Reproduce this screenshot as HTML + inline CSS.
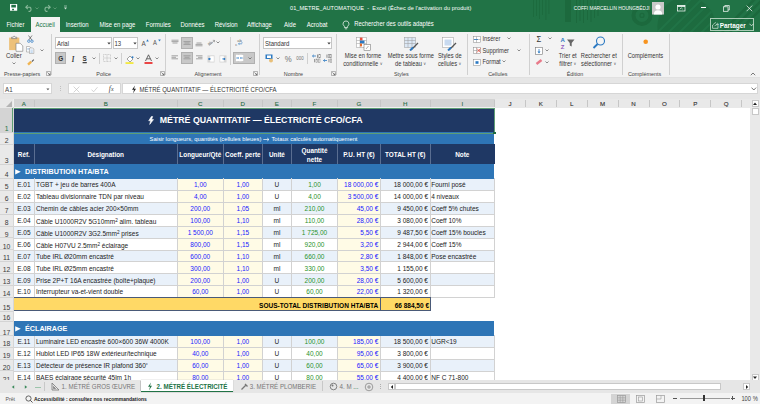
<!DOCTYPE html><html><head><meta charset="utf-8"><style>
html,body{margin:0;padding:0} body{width:760px;height:404px;overflow:hidden;position:relative;background:#fff;font-family:"Liberation Sans", sans-serif}
.a{position:absolute;box-sizing:border-box}
.t{position:absolute;white-space:nowrap;box-sizing:border-box}
</style></head><body>
<div class="a" style="left:13.4px;top:107.5px;width:481.1px;height:24.69999999999999px;background:#1f3864"></div>
<svg class="a" style="left:148.2px;top:116.4px" width="7" height="9"><polygon points="3.4,0.5 0.7,4.8 2.7,4.8 1.7,8.4 5.5,3.6 3.5,3.6 4.7,0.5" fill="#fff" stroke="#fff" stroke-width="0.6" stroke-linejoin="round"/></svg>
<div class="t" style="left:159.7px;top:112.0px;height:17.6px;line-height:17.6px;font-size:8.8px;color:#fff;font-weight:bold;">MÉTRÉ QUANTITATIF — ÉLECTRICITÉ CFO/CFA</div>
<div class="a" style="left:13.4px;top:132.2px;width:481.1px;height:12.100000000000023px;background:#2e75b6"></div>
<div class="t" style="left:53.5px;width:400px;text-align:center;top:134.29999999999998px;height:11.6px;line-height:11.6px;font-size:5.8px;color:#fff;font-weight:normal;">Saisir longueurs, quantités (cellules bleues) <svg width="7" height="5" style="vertical-align:-0.3px"><path d="M0.3 2.5 H5.8 M4.2 1 L6 2.5 L4.2 4" stroke="#fff" stroke-width="0.7" fill="none"/></svg> Totaux calculés automatiquement</div>
<div class="a" style="left:13.4px;top:144.3px;width:20.9px;height:19.69999999999999px;background:#1f3864"></div>
<div class="t" style="left:-176.15px;width:400px;text-align:center;top:148.65px;height:12.8px;line-height:12.8px;font-size:6.4px;color:#fff;font-weight:bold;">Réf.</div>
<div class="a" style="left:34.3px;top:144.3px;width:142.89999999999998px;height:19.69999999999999px;background:#1f3864"></div>
<div class="t" style="left:-94.25px;width:400px;text-align:center;top:148.65px;height:12.8px;line-height:12.8px;font-size:6.4px;color:#fff;font-weight:bold;">Désignation</div>
<div class="a" style="left:177.2px;top:144.3px;width:46.20000000000002px;height:19.69999999999999px;background:#1f3864"></div>
<div class="t" style="left:0.30000000000001137px;width:400px;text-align:center;top:148.65px;height:12.8px;line-height:12.8px;font-size:6.4px;color:#fff;font-weight:bold;">Longueur/Qté</div>
<div class="a" style="left:223.4px;top:144.3px;width:38.900000000000006px;height:19.69999999999999px;background:#1f3864"></div>
<div class="t" style="left:42.85000000000002px;width:400px;text-align:center;top:148.65px;height:12.8px;line-height:12.8px;font-size:6.4px;color:#fff;font-weight:bold;">Coeff. perte</div>
<div class="a" style="left:262.3px;top:144.3px;width:29.30000000000001px;height:19.69999999999999px;background:#1f3864"></div>
<div class="t" style="left:76.95000000000005px;width:400px;text-align:center;top:148.65px;height:12.8px;line-height:12.8px;font-size:6.4px;color:#fff;font-weight:bold;">Unité</div>
<div class="a" style="left:291.6px;top:144.3px;width:45.799999999999955px;height:19.69999999999999px;background:#1f3864"></div>
<div class="t" style="left:291.6px;width:45.799999999999955px;top:145.9px;text-align:center;font-size:6.4px;line-height:9.2px;color:#fff;font-weight:bold">Quantité<br>nette</div>
<div class="a" style="left:337.4px;top:144.3px;width:43.0px;height:19.69999999999999px;background:#1f3864"></div>
<div class="t" style="left:158.89999999999998px;width:400px;text-align:center;top:148.65px;height:12.8px;line-height:12.8px;font-size:6.4px;color:#fff;font-weight:bold;">P.U. HT (€)</div>
<div class="a" style="left:380.4px;top:144.3px;width:49.60000000000002px;height:19.69999999999999px;background:#1f3864"></div>
<div class="t" style="left:205.2px;width:400px;text-align:center;top:148.65px;height:12.8px;line-height:12.8px;font-size:6.4px;color:#fff;font-weight:bold;">TOTAL HT (€)</div>
<div class="a" style="left:430px;top:144.3px;width:64.5px;height:19.69999999999999px;background:#1f3864"></div>
<div class="t" style="left:262.25px;width:400px;text-align:center;top:148.65px;height:12.8px;line-height:12.8px;font-size:6.4px;color:#fff;font-weight:bold;">Note</div>
<div class="a" style="left:33.8px;top:144.3px;width:1.0px;height:19.69999999999999px;background:#5a6e91"></div>
<div class="a" style="left:176.7px;top:144.3px;width:1.0px;height:19.69999999999999px;background:#5a6e91"></div>
<div class="a" style="left:222.9px;top:144.3px;width:1.0px;height:19.69999999999999px;background:#5a6e91"></div>
<div class="a" style="left:261.8px;top:144.3px;width:1.0px;height:19.69999999999999px;background:#5a6e91"></div>
<div class="a" style="left:291.1px;top:144.3px;width:1.0px;height:19.69999999999999px;background:#5a6e91"></div>
<div class="a" style="left:336.9px;top:144.3px;width:1.0px;height:19.69999999999999px;background:#5a6e91"></div>
<div class="a" style="left:379.9px;top:144.3px;width:1.0px;height:19.69999999999999px;background:#5a6e91"></div>
<div class="a" style="left:429.5px;top:144.3px;width:1.0px;height:19.69999999999999px;background:#5a6e91"></div>
<div class="a" style="left:13.4px;top:164px;width:481.1px;height:14.5px;background:#2e75b6"></div>
<svg class="a" style="left:14.5px;top:169px" width="6" height="6"><polygon points="0.2,0.2 5.8,2.8 0.2,5.4" fill="#fff"/></svg>
<div class="t" style="left:25px;top:164.60000000000002px;height:14.4px;line-height:14.4px;font-size:7.2px;color:#fff;font-weight:bold;">DISTRIBUTION HTA/BTA</div>
<div class="a" style="left:13.4px;top:178.5px;width:20.9px;height:11.889999999999986px;background:#e9f1fa"></div>
<div class="t" style="left:-176.15px;width:400px;text-align:center;top:178.44px;height:13.0px;line-height:13.0px;font-size:6.5px;color:#222;font-weight:normal;">E.01</div>
<div class="a" style="left:34.3px;top:178.5px;width:142.89999999999998px;height:11.889999999999986px;background:#e9f1fa"></div>
<div class="t" style="left:36.0px;top:178.44px;height:13.0px;line-height:13.0px;font-size:6.5px;color:#222;font-weight:normal;">TGBT + jeu de barres 400A</div>
<div class="a" style="left:177.2px;top:178.5px;width:46.20000000000002px;height:11.889999999999986px;background:#fffbe6"></div>
<div class="t" style="left:0.30000000000001137px;width:400px;text-align:center;top:178.44px;height:13.0px;line-height:13.0px;font-size:6.5px;color:#1a1aff;font-weight:normal;">1,00</div>
<div class="a" style="left:223.4px;top:178.5px;width:38.900000000000006px;height:11.889999999999986px;background:#fffbe6"></div>
<div class="t" style="left:42.85000000000002px;width:400px;text-align:center;top:178.44px;height:13.0px;line-height:13.0px;font-size:6.5px;color:#1a1aff;font-weight:normal;">1,00</div>
<div class="a" style="left:262.3px;top:178.5px;width:29.30000000000001px;height:11.889999999999986px;background:#e9f1fa"></div>
<div class="t" style="left:76.95000000000005px;width:400px;text-align:center;top:178.44px;height:13.0px;line-height:13.0px;font-size:6.5px;color:#222;font-weight:normal;">U</div>
<div class="a" style="left:291.6px;top:178.5px;width:45.799999999999955px;height:11.889999999999986px;background:#e9f1fa"></div>
<div class="t" style="left:114.5px;width:400px;text-align:center;top:178.44px;height:13.0px;line-height:13.0px;font-size:6.5px;color:#2a922a;font-weight:normal;">1,00</div>
<div class="a" style="left:337.4px;top:178.5px;width:43.0px;height:11.889999999999986px;background:#fffbe6"></div>
<div class="t" style="left:-21.600000000000023px;width:400px;text-align:right;top:178.44px;height:13.0px;line-height:13.0px;font-size:6.5px;color:#1a1aff;font-weight:normal;">18 000,00 €</div>
<div class="a" style="left:380.4px;top:178.5px;width:49.60000000000002px;height:11.889999999999986px;background:#e9f1fa"></div>
<div class="t" style="left:28px;width:400px;text-align:right;top:178.44px;height:13.0px;line-height:13.0px;font-size:6.5px;color:#222;font-weight:normal;">18 000,00 €</div>
<div class="a" style="left:430px;top:178.5px;width:64.5px;height:11.889999999999986px;background:#e9f1fa"></div>
<div class="t" style="left:431.2px;top:178.44px;height:13.0px;line-height:13.0px;font-size:6.5px;color:#222;font-weight:normal;">Fourni posé</div>
<div class="a" style="left:13.4px;top:190.39px;width:20.9px;height:11.889999999999986px;background:#ffffff"></div>
<div class="t" style="left:-176.15px;width:400px;text-align:center;top:190.32999999999998px;height:13.0px;line-height:13.0px;font-size:6.5px;color:#222;font-weight:normal;">E.02</div>
<div class="a" style="left:34.3px;top:190.39px;width:142.89999999999998px;height:11.889999999999986px;background:#ffffff"></div>
<div class="t" style="left:36.0px;top:190.32999999999998px;height:13.0px;line-height:13.0px;font-size:6.5px;color:#222;font-weight:normal;">Tableau divisionnaire TDN par niveau</div>
<div class="a" style="left:177.2px;top:190.39px;width:46.20000000000002px;height:11.889999999999986px;background:#fffbe6"></div>
<div class="t" style="left:0.30000000000001137px;width:400px;text-align:center;top:190.32999999999998px;height:13.0px;line-height:13.0px;font-size:6.5px;color:#1a1aff;font-weight:normal;">4,00</div>
<div class="a" style="left:223.4px;top:190.39px;width:38.900000000000006px;height:11.889999999999986px;background:#fffbe6"></div>
<div class="t" style="left:42.85000000000002px;width:400px;text-align:center;top:190.32999999999998px;height:13.0px;line-height:13.0px;font-size:6.5px;color:#1a1aff;font-weight:normal;">1,00</div>
<div class="a" style="left:262.3px;top:190.39px;width:29.30000000000001px;height:11.889999999999986px;background:#ffffff"></div>
<div class="t" style="left:76.95000000000005px;width:400px;text-align:center;top:190.32999999999998px;height:13.0px;line-height:13.0px;font-size:6.5px;color:#222;font-weight:normal;">U</div>
<div class="a" style="left:291.6px;top:190.39px;width:45.799999999999955px;height:11.889999999999986px;background:#ffffff"></div>
<div class="t" style="left:114.5px;width:400px;text-align:center;top:190.32999999999998px;height:13.0px;line-height:13.0px;font-size:6.5px;color:#2a922a;font-weight:normal;">4,00</div>
<div class="a" style="left:337.4px;top:190.39px;width:43.0px;height:11.889999999999986px;background:#fffbe6"></div>
<div class="t" style="left:-21.600000000000023px;width:400px;text-align:right;top:190.32999999999998px;height:13.0px;line-height:13.0px;font-size:6.5px;color:#1a1aff;font-weight:normal;">3 500,00 €</div>
<div class="a" style="left:380.4px;top:190.39px;width:49.60000000000002px;height:11.889999999999986px;background:#ffffff"></div>
<div class="t" style="left:28px;width:400px;text-align:right;top:190.32999999999998px;height:13.0px;line-height:13.0px;font-size:6.5px;color:#222;font-weight:normal;">14 000,00 €</div>
<div class="a" style="left:430px;top:190.39px;width:64.5px;height:11.889999999999986px;background:#ffffff"></div>
<div class="t" style="left:431.2px;top:190.32999999999998px;height:13.0px;line-height:13.0px;font-size:6.5px;color:#222;font-weight:normal;">4 niveaux</div>
<div class="a" style="left:13.4px;top:202.27999999999997px;width:20.9px;height:11.889999999999986px;background:#e9f1fa"></div>
<div class="t" style="left:-176.15px;width:400px;text-align:center;top:202.21999999999997px;height:13.0px;line-height:13.0px;font-size:6.5px;color:#222;font-weight:normal;">E.03</div>
<div class="a" style="left:34.3px;top:202.27999999999997px;width:142.89999999999998px;height:11.889999999999986px;background:#e9f1fa"></div>
<div class="t" style="left:36.0px;top:202.21999999999997px;height:13.0px;line-height:13.0px;font-size:6.5px;color:#222;font-weight:normal;">Chemin de câbles acier 200×50mm</div>
<div class="a" style="left:177.2px;top:202.27999999999997px;width:46.20000000000002px;height:11.889999999999986px;background:#fffbe6"></div>
<div class="t" style="left:0.30000000000001137px;width:400px;text-align:center;top:202.21999999999997px;height:13.0px;line-height:13.0px;font-size:6.5px;color:#1a1aff;font-weight:normal;">200,00</div>
<div class="a" style="left:223.4px;top:202.27999999999997px;width:38.900000000000006px;height:11.889999999999986px;background:#fffbe6"></div>
<div class="t" style="left:42.85000000000002px;width:400px;text-align:center;top:202.21999999999997px;height:13.0px;line-height:13.0px;font-size:6.5px;color:#1a1aff;font-weight:normal;">1,05</div>
<div class="a" style="left:262.3px;top:202.27999999999997px;width:29.30000000000001px;height:11.889999999999986px;background:#e9f1fa"></div>
<div class="t" style="left:76.95000000000005px;width:400px;text-align:center;top:202.21999999999997px;height:13.0px;line-height:13.0px;font-size:6.5px;color:#222;font-weight:normal;">ml</div>
<div class="a" style="left:291.6px;top:202.27999999999997px;width:45.799999999999955px;height:11.889999999999986px;background:#e9f1fa"></div>
<div class="t" style="left:114.5px;width:400px;text-align:center;top:202.21999999999997px;height:13.0px;line-height:13.0px;font-size:6.5px;color:#2a922a;font-weight:normal;">210,00</div>
<div class="a" style="left:337.4px;top:202.27999999999997px;width:43.0px;height:11.889999999999986px;background:#fffbe6"></div>
<div class="t" style="left:-21.600000000000023px;width:400px;text-align:right;top:202.21999999999997px;height:13.0px;line-height:13.0px;font-size:6.5px;color:#1a1aff;font-weight:normal;">45,00 €</div>
<div class="a" style="left:380.4px;top:202.27999999999997px;width:49.60000000000002px;height:11.889999999999986px;background:#e9f1fa"></div>
<div class="t" style="left:28px;width:400px;text-align:right;top:202.21999999999997px;height:13.0px;line-height:13.0px;font-size:6.5px;color:#222;font-weight:normal;">9 450,00 €</div>
<div class="a" style="left:430px;top:202.27999999999997px;width:64.5px;height:11.889999999999986px;background:#e9f1fa"></div>
<div class="t" style="left:431.2px;top:202.21999999999997px;height:13.0px;line-height:13.0px;font-size:6.5px;color:#222;font-weight:normal;">Coeff 5% chutes</div>
<div class="a" style="left:13.4px;top:214.16999999999996px;width:20.9px;height:11.889999999999986px;background:#ffffff"></div>
<div class="t" style="left:-176.15px;width:400px;text-align:center;top:214.10999999999996px;height:13.0px;line-height:13.0px;font-size:6.5px;color:#222;font-weight:normal;">E.04</div>
<div class="a" style="left:34.3px;top:214.16999999999996px;width:142.89999999999998px;height:11.889999999999986px;background:#ffffff"></div>
<div class="t" style="left:36.0px;top:214.10999999999996px;height:13.0px;line-height:13.0px;font-size:6.5px;color:#222;font-weight:normal;">Câble U1000R2V 5G10mm<span style="font-size:4.6px;vertical-align:1.6px">2</span> alim. tableau</div>
<div class="a" style="left:177.2px;top:214.16999999999996px;width:46.20000000000002px;height:11.889999999999986px;background:#fffbe6"></div>
<div class="t" style="left:0.30000000000001137px;width:400px;text-align:center;top:214.10999999999996px;height:13.0px;line-height:13.0px;font-size:6.5px;color:#1a1aff;font-weight:normal;">100,00</div>
<div class="a" style="left:223.4px;top:214.16999999999996px;width:38.900000000000006px;height:11.889999999999986px;background:#fffbe6"></div>
<div class="t" style="left:42.85000000000002px;width:400px;text-align:center;top:214.10999999999996px;height:13.0px;line-height:13.0px;font-size:6.5px;color:#1a1aff;font-weight:normal;">1,10</div>
<div class="a" style="left:262.3px;top:214.16999999999996px;width:29.30000000000001px;height:11.889999999999986px;background:#ffffff"></div>
<div class="t" style="left:76.95000000000005px;width:400px;text-align:center;top:214.10999999999996px;height:13.0px;line-height:13.0px;font-size:6.5px;color:#222;font-weight:normal;">ml</div>
<div class="a" style="left:291.6px;top:214.16999999999996px;width:45.799999999999955px;height:11.889999999999986px;background:#ffffff"></div>
<div class="t" style="left:114.5px;width:400px;text-align:center;top:214.10999999999996px;height:13.0px;line-height:13.0px;font-size:6.5px;color:#2a922a;font-weight:normal;">110,00</div>
<div class="a" style="left:337.4px;top:214.16999999999996px;width:43.0px;height:11.889999999999986px;background:#fffbe6"></div>
<div class="t" style="left:-21.600000000000023px;width:400px;text-align:right;top:214.10999999999996px;height:13.0px;line-height:13.0px;font-size:6.5px;color:#1a1aff;font-weight:normal;">28,00 €</div>
<div class="a" style="left:380.4px;top:214.16999999999996px;width:49.60000000000002px;height:11.889999999999986px;background:#ffffff"></div>
<div class="t" style="left:28px;width:400px;text-align:right;top:214.10999999999996px;height:13.0px;line-height:13.0px;font-size:6.5px;color:#222;font-weight:normal;">3 080,00 €</div>
<div class="a" style="left:430px;top:214.16999999999996px;width:64.5px;height:11.889999999999986px;background:#ffffff"></div>
<div class="t" style="left:431.2px;top:214.10999999999996px;height:13.0px;line-height:13.0px;font-size:6.5px;color:#222;font-weight:normal;">Coeff 10%</div>
<div class="a" style="left:13.4px;top:226.05999999999995px;width:20.9px;height:11.889999999999986px;background:#e9f1fa"></div>
<div class="t" style="left:-176.15px;width:400px;text-align:center;top:225.99999999999994px;height:13.0px;line-height:13.0px;font-size:6.5px;color:#222;font-weight:normal;">E.05</div>
<div class="a" style="left:34.3px;top:226.05999999999995px;width:142.89999999999998px;height:11.889999999999986px;background:#e9f1fa"></div>
<div class="t" style="left:36.0px;top:225.99999999999994px;height:13.0px;line-height:13.0px;font-size:6.5px;color:#222;font-weight:normal;">Câble U1000R2V 3G2.5mm<span style="font-size:4.6px;vertical-align:1.6px">2</span> prises</div>
<div class="a" style="left:177.2px;top:226.05999999999995px;width:46.20000000000002px;height:11.889999999999986px;background:#fffbe6"></div>
<div class="t" style="left:0.30000000000001137px;width:400px;text-align:center;top:225.99999999999994px;height:13.0px;line-height:13.0px;font-size:6.5px;color:#1a1aff;font-weight:normal;">1 500,00</div>
<div class="a" style="left:223.4px;top:226.05999999999995px;width:38.900000000000006px;height:11.889999999999986px;background:#fffbe6"></div>
<div class="t" style="left:42.85000000000002px;width:400px;text-align:center;top:225.99999999999994px;height:13.0px;line-height:13.0px;font-size:6.5px;color:#1a1aff;font-weight:normal;">1,15</div>
<div class="a" style="left:262.3px;top:226.05999999999995px;width:29.30000000000001px;height:11.889999999999986px;background:#e9f1fa"></div>
<div class="t" style="left:76.95000000000005px;width:400px;text-align:center;top:225.99999999999994px;height:13.0px;line-height:13.0px;font-size:6.5px;color:#222;font-weight:normal;">ml</div>
<div class="a" style="left:291.6px;top:226.05999999999995px;width:45.799999999999955px;height:11.889999999999986px;background:#e9f1fa"></div>
<div class="t" style="left:114.5px;width:400px;text-align:center;top:225.99999999999994px;height:13.0px;line-height:13.0px;font-size:6.5px;color:#2a922a;font-weight:normal;">1 725,00</div>
<div class="a" style="left:337.4px;top:226.05999999999995px;width:43.0px;height:11.889999999999986px;background:#fffbe6"></div>
<div class="t" style="left:-21.600000000000023px;width:400px;text-align:right;top:225.99999999999994px;height:13.0px;line-height:13.0px;font-size:6.5px;color:#1a1aff;font-weight:normal;">5,50 €</div>
<div class="a" style="left:380.4px;top:226.05999999999995px;width:49.60000000000002px;height:11.889999999999986px;background:#e9f1fa"></div>
<div class="t" style="left:28px;width:400px;text-align:right;top:225.99999999999994px;height:13.0px;line-height:13.0px;font-size:6.5px;color:#222;font-weight:normal;">9 487,50 €</div>
<div class="a" style="left:430px;top:226.05999999999995px;width:64.5px;height:11.889999999999986px;background:#e9f1fa"></div>
<div class="t" style="left:431.2px;top:225.99999999999994px;height:13.0px;line-height:13.0px;font-size:6.5px;color:#222;font-weight:normal;">Coeff 15% boucles</div>
<div class="a" style="left:13.4px;top:237.94999999999993px;width:20.9px;height:11.889999999999986px;background:#ffffff"></div>
<div class="t" style="left:-176.15px;width:400px;text-align:center;top:237.88999999999993px;height:13.0px;line-height:13.0px;font-size:6.5px;color:#222;font-weight:normal;">E.06</div>
<div class="a" style="left:34.3px;top:237.94999999999993px;width:142.89999999999998px;height:11.889999999999986px;background:#ffffff"></div>
<div class="t" style="left:36.0px;top:237.88999999999993px;height:13.0px;line-height:13.0px;font-size:6.5px;color:#222;font-weight:normal;">Câble H07VU 2.5mm<span style="font-size:4.6px;vertical-align:1.6px">2</span> éclairage</div>
<div class="a" style="left:177.2px;top:237.94999999999993px;width:46.20000000000002px;height:11.889999999999986px;background:#fffbe6"></div>
<div class="t" style="left:0.30000000000001137px;width:400px;text-align:center;top:237.88999999999993px;height:13.0px;line-height:13.0px;font-size:6.5px;color:#1a1aff;font-weight:normal;">800,00</div>
<div class="a" style="left:223.4px;top:237.94999999999993px;width:38.900000000000006px;height:11.889999999999986px;background:#fffbe6"></div>
<div class="t" style="left:42.85000000000002px;width:400px;text-align:center;top:237.88999999999993px;height:13.0px;line-height:13.0px;font-size:6.5px;color:#1a1aff;font-weight:normal;">1,15</div>
<div class="a" style="left:262.3px;top:237.94999999999993px;width:29.30000000000001px;height:11.889999999999986px;background:#ffffff"></div>
<div class="t" style="left:76.95000000000005px;width:400px;text-align:center;top:237.88999999999993px;height:13.0px;line-height:13.0px;font-size:6.5px;color:#222;font-weight:normal;">ml</div>
<div class="a" style="left:291.6px;top:237.94999999999993px;width:45.799999999999955px;height:11.889999999999986px;background:#ffffff"></div>
<div class="t" style="left:114.5px;width:400px;text-align:center;top:237.88999999999993px;height:13.0px;line-height:13.0px;font-size:6.5px;color:#2a922a;font-weight:normal;">920,00</div>
<div class="a" style="left:337.4px;top:237.94999999999993px;width:43.0px;height:11.889999999999986px;background:#fffbe6"></div>
<div class="t" style="left:-21.600000000000023px;width:400px;text-align:right;top:237.88999999999993px;height:13.0px;line-height:13.0px;font-size:6.5px;color:#1a1aff;font-weight:normal;">3,20 €</div>
<div class="a" style="left:380.4px;top:237.94999999999993px;width:49.60000000000002px;height:11.889999999999986px;background:#ffffff"></div>
<div class="t" style="left:28px;width:400px;text-align:right;top:237.88999999999993px;height:13.0px;line-height:13.0px;font-size:6.5px;color:#222;font-weight:normal;">2 944,00 €</div>
<div class="a" style="left:430px;top:237.94999999999993px;width:64.5px;height:11.889999999999986px;background:#ffffff"></div>
<div class="t" style="left:431.2px;top:237.88999999999993px;height:13.0px;line-height:13.0px;font-size:6.5px;color:#222;font-weight:normal;">Coeff 15%</div>
<div class="a" style="left:13.4px;top:249.83999999999992px;width:20.9px;height:11.889999999999986px;background:#e9f1fa"></div>
<div class="t" style="left:-176.15px;width:400px;text-align:center;top:249.77999999999992px;height:13.0px;line-height:13.0px;font-size:6.5px;color:#222;font-weight:normal;">E.07</div>
<div class="a" style="left:34.3px;top:249.83999999999992px;width:142.89999999999998px;height:11.889999999999986px;background:#e9f1fa"></div>
<div class="t" style="left:36.0px;top:249.77999999999992px;height:13.0px;line-height:13.0px;font-size:6.5px;color:#222;font-weight:normal;">Tube IRL Ø20mm encastré</div>
<div class="a" style="left:177.2px;top:249.83999999999992px;width:46.20000000000002px;height:11.889999999999986px;background:#fffbe6"></div>
<div class="t" style="left:0.30000000000001137px;width:400px;text-align:center;top:249.77999999999992px;height:13.0px;line-height:13.0px;font-size:6.5px;color:#1a1aff;font-weight:normal;">600,00</div>
<div class="a" style="left:223.4px;top:249.83999999999992px;width:38.900000000000006px;height:11.889999999999986px;background:#fffbe6"></div>
<div class="t" style="left:42.85000000000002px;width:400px;text-align:center;top:249.77999999999992px;height:13.0px;line-height:13.0px;font-size:6.5px;color:#1a1aff;font-weight:normal;">1,10</div>
<div class="a" style="left:262.3px;top:249.83999999999992px;width:29.30000000000001px;height:11.889999999999986px;background:#e9f1fa"></div>
<div class="t" style="left:76.95000000000005px;width:400px;text-align:center;top:249.77999999999992px;height:13.0px;line-height:13.0px;font-size:6.5px;color:#222;font-weight:normal;">ml</div>
<div class="a" style="left:291.6px;top:249.83999999999992px;width:45.799999999999955px;height:11.889999999999986px;background:#e9f1fa"></div>
<div class="t" style="left:114.5px;width:400px;text-align:center;top:249.77999999999992px;height:13.0px;line-height:13.0px;font-size:6.5px;color:#2a922a;font-weight:normal;">660,00</div>
<div class="a" style="left:337.4px;top:249.83999999999992px;width:43.0px;height:11.889999999999986px;background:#fffbe6"></div>
<div class="t" style="left:-21.600000000000023px;width:400px;text-align:right;top:249.77999999999992px;height:13.0px;line-height:13.0px;font-size:6.5px;color:#1a1aff;font-weight:normal;">2,80 €</div>
<div class="a" style="left:380.4px;top:249.83999999999992px;width:49.60000000000002px;height:11.889999999999986px;background:#e9f1fa"></div>
<div class="t" style="left:28px;width:400px;text-align:right;top:249.77999999999992px;height:13.0px;line-height:13.0px;font-size:6.5px;color:#222;font-weight:normal;">1 848,00 €</div>
<div class="a" style="left:430px;top:249.83999999999992px;width:64.5px;height:11.889999999999986px;background:#e9f1fa"></div>
<div class="t" style="left:431.2px;top:249.77999999999992px;height:13.0px;line-height:13.0px;font-size:6.5px;color:#222;font-weight:normal;">Pose encastrée</div>
<div class="a" style="left:13.4px;top:261.7299999999999px;width:20.9px;height:11.889999999999986px;background:#ffffff"></div>
<div class="t" style="left:-176.15px;width:400px;text-align:center;top:261.6699999999999px;height:13.0px;line-height:13.0px;font-size:6.5px;color:#222;font-weight:normal;">E.08</div>
<div class="a" style="left:34.3px;top:261.7299999999999px;width:142.89999999999998px;height:11.889999999999986px;background:#ffffff"></div>
<div class="t" style="left:36.0px;top:261.6699999999999px;height:13.0px;line-height:13.0px;font-size:6.5px;color:#222;font-weight:normal;">Tube IRL Ø25mm encastré</div>
<div class="a" style="left:177.2px;top:261.7299999999999px;width:46.20000000000002px;height:11.889999999999986px;background:#fffbe6"></div>
<div class="t" style="left:0.30000000000001137px;width:400px;text-align:center;top:261.6699999999999px;height:13.0px;line-height:13.0px;font-size:6.5px;color:#1a1aff;font-weight:normal;">300,00</div>
<div class="a" style="left:223.4px;top:261.7299999999999px;width:38.900000000000006px;height:11.889999999999986px;background:#fffbe6"></div>
<div class="t" style="left:42.85000000000002px;width:400px;text-align:center;top:261.6699999999999px;height:13.0px;line-height:13.0px;font-size:6.5px;color:#1a1aff;font-weight:normal;">1,10</div>
<div class="a" style="left:262.3px;top:261.7299999999999px;width:29.30000000000001px;height:11.889999999999986px;background:#ffffff"></div>
<div class="t" style="left:76.95000000000005px;width:400px;text-align:center;top:261.6699999999999px;height:13.0px;line-height:13.0px;font-size:6.5px;color:#222;font-weight:normal;">ml</div>
<div class="a" style="left:291.6px;top:261.7299999999999px;width:45.799999999999955px;height:11.889999999999986px;background:#ffffff"></div>
<div class="t" style="left:114.5px;width:400px;text-align:center;top:261.6699999999999px;height:13.0px;line-height:13.0px;font-size:6.5px;color:#2a922a;font-weight:normal;">330,00</div>
<div class="a" style="left:337.4px;top:261.7299999999999px;width:43.0px;height:11.889999999999986px;background:#fffbe6"></div>
<div class="t" style="left:-21.600000000000023px;width:400px;text-align:right;top:261.6699999999999px;height:13.0px;line-height:13.0px;font-size:6.5px;color:#1a1aff;font-weight:normal;">3,50 €</div>
<div class="a" style="left:380.4px;top:261.7299999999999px;width:49.60000000000002px;height:11.889999999999986px;background:#ffffff"></div>
<div class="t" style="left:28px;width:400px;text-align:right;top:261.6699999999999px;height:13.0px;line-height:13.0px;font-size:6.5px;color:#222;font-weight:normal;">1 155,00 €</div>
<div class="a" style="left:430px;top:261.7299999999999px;width:64.5px;height:11.889999999999986px;background:#ffffff"></div>
<div class="a" style="left:13.4px;top:273.6199999999999px;width:20.9px;height:11.889999999999986px;background:#e9f1fa"></div>
<div class="t" style="left:-176.15px;width:400px;text-align:center;top:273.5599999999999px;height:13.0px;line-height:13.0px;font-size:6.5px;color:#222;font-weight:normal;">E.09</div>
<div class="a" style="left:34.3px;top:273.6199999999999px;width:142.89999999999998px;height:11.889999999999986px;background:#e9f1fa"></div>
<div class="t" style="left:36.0px;top:273.5599999999999px;height:13.0px;line-height:13.0px;font-size:6.5px;color:#222;font-weight:normal;">Prise 2P+T 16A encastrée (boîte+plaque)</div>
<div class="a" style="left:177.2px;top:273.6199999999999px;width:46.20000000000002px;height:11.889999999999986px;background:#fffbe6"></div>
<div class="t" style="left:0.30000000000001137px;width:400px;text-align:center;top:273.5599999999999px;height:13.0px;line-height:13.0px;font-size:6.5px;color:#1a1aff;font-weight:normal;">200,00</div>
<div class="a" style="left:223.4px;top:273.6199999999999px;width:38.900000000000006px;height:11.889999999999986px;background:#fffbe6"></div>
<div class="t" style="left:42.85000000000002px;width:400px;text-align:center;top:273.5599999999999px;height:13.0px;line-height:13.0px;font-size:6.5px;color:#1a1aff;font-weight:normal;">1,00</div>
<div class="a" style="left:262.3px;top:273.6199999999999px;width:29.30000000000001px;height:11.889999999999986px;background:#e9f1fa"></div>
<div class="t" style="left:76.95000000000005px;width:400px;text-align:center;top:273.5599999999999px;height:13.0px;line-height:13.0px;font-size:6.5px;color:#222;font-weight:normal;">U</div>
<div class="a" style="left:291.6px;top:273.6199999999999px;width:45.799999999999955px;height:11.889999999999986px;background:#e9f1fa"></div>
<div class="t" style="left:114.5px;width:400px;text-align:center;top:273.5599999999999px;height:13.0px;line-height:13.0px;font-size:6.5px;color:#2a922a;font-weight:normal;">200,00</div>
<div class="a" style="left:337.4px;top:273.6199999999999px;width:43.0px;height:11.889999999999986px;background:#fffbe6"></div>
<div class="t" style="left:-21.600000000000023px;width:400px;text-align:right;top:273.5599999999999px;height:13.0px;line-height:13.0px;font-size:6.5px;color:#1a1aff;font-weight:normal;">28,00 €</div>
<div class="a" style="left:380.4px;top:273.6199999999999px;width:49.60000000000002px;height:11.889999999999986px;background:#e9f1fa"></div>
<div class="t" style="left:28px;width:400px;text-align:right;top:273.5599999999999px;height:13.0px;line-height:13.0px;font-size:6.5px;color:#222;font-weight:normal;">5 600,00 €</div>
<div class="a" style="left:430px;top:273.6199999999999px;width:64.5px;height:11.889999999999986px;background:#e9f1fa"></div>
<div class="a" style="left:13.4px;top:285.5099999999999px;width:20.9px;height:11.889999999999986px;background:#ffffff"></div>
<div class="t" style="left:-176.15px;width:400px;text-align:center;top:285.4499999999999px;height:13.0px;line-height:13.0px;font-size:6.5px;color:#222;font-weight:normal;">E.10</div>
<div class="a" style="left:34.3px;top:285.5099999999999px;width:142.89999999999998px;height:11.889999999999986px;background:#ffffff"></div>
<div class="t" style="left:36.0px;top:285.4499999999999px;height:13.0px;line-height:13.0px;font-size:6.5px;color:#222;font-weight:normal;">Interrupteur va-et-vient double</div>
<div class="a" style="left:177.2px;top:285.5099999999999px;width:46.20000000000002px;height:11.889999999999986px;background:#fffbe6"></div>
<div class="t" style="left:0.30000000000001137px;width:400px;text-align:center;top:285.4499999999999px;height:13.0px;line-height:13.0px;font-size:6.5px;color:#1a1aff;font-weight:normal;">60,00</div>
<div class="a" style="left:223.4px;top:285.5099999999999px;width:38.900000000000006px;height:11.889999999999986px;background:#fffbe6"></div>
<div class="t" style="left:42.85000000000002px;width:400px;text-align:center;top:285.4499999999999px;height:13.0px;line-height:13.0px;font-size:6.5px;color:#1a1aff;font-weight:normal;">1,00</div>
<div class="a" style="left:262.3px;top:285.5099999999999px;width:29.30000000000001px;height:11.889999999999986px;background:#ffffff"></div>
<div class="t" style="left:76.95000000000005px;width:400px;text-align:center;top:285.4499999999999px;height:13.0px;line-height:13.0px;font-size:6.5px;color:#222;font-weight:normal;">U</div>
<div class="a" style="left:291.6px;top:285.5099999999999px;width:45.799999999999955px;height:11.889999999999986px;background:#ffffff"></div>
<div class="t" style="left:114.5px;width:400px;text-align:center;top:285.4499999999999px;height:13.0px;line-height:13.0px;font-size:6.5px;color:#2a922a;font-weight:normal;">60,00</div>
<div class="a" style="left:337.4px;top:285.5099999999999px;width:43.0px;height:11.889999999999986px;background:#fffbe6"></div>
<div class="t" style="left:-21.600000000000023px;width:400px;text-align:right;top:285.4499999999999px;height:13.0px;line-height:13.0px;font-size:6.5px;color:#1a1aff;font-weight:normal;">22,00 €</div>
<div class="a" style="left:380.4px;top:285.5099999999999px;width:49.60000000000002px;height:11.889999999999986px;background:#ffffff"></div>
<div class="t" style="left:28px;width:400px;text-align:right;top:285.4499999999999px;height:13.0px;line-height:13.0px;font-size:6.5px;color:#222;font-weight:normal;">1 320,00 €</div>
<div class="a" style="left:430px;top:285.5099999999999px;width:64.5px;height:11.889999999999986px;background:#ffffff"></div>
<div class="a" style="left:13.4px;top:335.3px;width:20.9px;height:11.879999999999995px;background:#e9f1fa"></div>
<div class="t" style="left:-176.15px;width:400px;text-align:center;top:335.23px;height:13.0px;line-height:13.0px;font-size:6.5px;color:#222;font-weight:normal;">E.11</div>
<div class="a" style="left:34.3px;top:335.3px;width:142.89999999999998px;height:11.879999999999995px;background:#e9f1fa"></div>
<div class="t" style="left:36.0px;top:335.23px;height:13.0px;line-height:13.0px;font-size:6.5px;color:#222;font-weight:normal;">Luminaire LED encastré 600×600 36W 4000K</div>
<div class="a" style="left:177.2px;top:335.3px;width:46.20000000000002px;height:11.879999999999995px;background:#fffbe6"></div>
<div class="t" style="left:0.30000000000001137px;width:400px;text-align:center;top:335.23px;height:13.0px;line-height:13.0px;font-size:6.5px;color:#1a1aff;font-weight:normal;">100,00</div>
<div class="a" style="left:223.4px;top:335.3px;width:38.900000000000006px;height:11.879999999999995px;background:#fffbe6"></div>
<div class="t" style="left:42.85000000000002px;width:400px;text-align:center;top:335.23px;height:13.0px;line-height:13.0px;font-size:6.5px;color:#1a1aff;font-weight:normal;">1,00</div>
<div class="a" style="left:262.3px;top:335.3px;width:29.30000000000001px;height:11.879999999999995px;background:#e9f1fa"></div>
<div class="t" style="left:76.95000000000005px;width:400px;text-align:center;top:335.23px;height:13.0px;line-height:13.0px;font-size:6.5px;color:#222;font-weight:normal;">U</div>
<div class="a" style="left:291.6px;top:335.3px;width:45.799999999999955px;height:11.879999999999995px;background:#e9f1fa"></div>
<div class="t" style="left:114.5px;width:400px;text-align:center;top:335.23px;height:13.0px;line-height:13.0px;font-size:6.5px;color:#2a922a;font-weight:normal;">100,00</div>
<div class="a" style="left:337.4px;top:335.3px;width:43.0px;height:11.879999999999995px;background:#fffbe6"></div>
<div class="t" style="left:-21.600000000000023px;width:400px;text-align:right;top:335.23px;height:13.0px;line-height:13.0px;font-size:6.5px;color:#1a1aff;font-weight:normal;">185,00 €</div>
<div class="a" style="left:380.4px;top:335.3px;width:49.60000000000002px;height:11.879999999999995px;background:#e9f1fa"></div>
<div class="t" style="left:28px;width:400px;text-align:right;top:335.23px;height:13.0px;line-height:13.0px;font-size:6.5px;color:#222;font-weight:normal;">18 500,00 €</div>
<div class="a" style="left:430px;top:335.3px;width:64.5px;height:11.879999999999995px;background:#e9f1fa"></div>
<div class="t" style="left:431.2px;top:335.23px;height:13.0px;line-height:13.0px;font-size:6.5px;color:#222;font-weight:normal;">UGR&lt;19</div>
<div class="a" style="left:13.4px;top:347.18px;width:20.9px;height:11.879999999999995px;background:#ffffff"></div>
<div class="t" style="left:-176.15px;width:400px;text-align:center;top:347.11px;height:13.0px;line-height:13.0px;font-size:6.5px;color:#222;font-weight:normal;">E.12</div>
<div class="a" style="left:34.3px;top:347.18px;width:142.89999999999998px;height:11.879999999999995px;background:#ffffff"></div>
<div class="t" style="left:36.0px;top:347.11px;height:13.0px;line-height:13.0px;font-size:6.5px;color:#222;font-weight:normal;">Hublot LED IP65 18W extérieur/technique</div>
<div class="a" style="left:177.2px;top:347.18px;width:46.20000000000002px;height:11.879999999999995px;background:#fffbe6"></div>
<div class="t" style="left:0.30000000000001137px;width:400px;text-align:center;top:347.11px;height:13.0px;line-height:13.0px;font-size:6.5px;color:#1a1aff;font-weight:normal;">40,00</div>
<div class="a" style="left:223.4px;top:347.18px;width:38.900000000000006px;height:11.879999999999995px;background:#fffbe6"></div>
<div class="t" style="left:42.85000000000002px;width:400px;text-align:center;top:347.11px;height:13.0px;line-height:13.0px;font-size:6.5px;color:#1a1aff;font-weight:normal;">1,00</div>
<div class="a" style="left:262.3px;top:347.18px;width:29.30000000000001px;height:11.879999999999995px;background:#ffffff"></div>
<div class="t" style="left:76.95000000000005px;width:400px;text-align:center;top:347.11px;height:13.0px;line-height:13.0px;font-size:6.5px;color:#222;font-weight:normal;">U</div>
<div class="a" style="left:291.6px;top:347.18px;width:45.799999999999955px;height:11.879999999999995px;background:#ffffff"></div>
<div class="t" style="left:114.5px;width:400px;text-align:center;top:347.11px;height:13.0px;line-height:13.0px;font-size:6.5px;color:#2a922a;font-weight:normal;">40,00</div>
<div class="a" style="left:337.4px;top:347.18px;width:43.0px;height:11.879999999999995px;background:#fffbe6"></div>
<div class="t" style="left:-21.600000000000023px;width:400px;text-align:right;top:347.11px;height:13.0px;line-height:13.0px;font-size:6.5px;color:#1a1aff;font-weight:normal;">95,00 €</div>
<div class="a" style="left:380.4px;top:347.18px;width:49.60000000000002px;height:11.879999999999995px;background:#ffffff"></div>
<div class="t" style="left:28px;width:400px;text-align:right;top:347.11px;height:13.0px;line-height:13.0px;font-size:6.5px;color:#222;font-weight:normal;">3 800,00 €</div>
<div class="a" style="left:430px;top:347.18px;width:64.5px;height:11.879999999999995px;background:#ffffff"></div>
<div class="a" style="left:13.4px;top:359.06px;width:20.9px;height:11.879999999999995px;background:#e9f1fa"></div>
<div class="t" style="left:-176.15px;width:400px;text-align:center;top:358.99px;height:13.0px;line-height:13.0px;font-size:6.5px;color:#222;font-weight:normal;">E.13</div>
<div class="a" style="left:34.3px;top:359.06px;width:142.89999999999998px;height:11.879999999999995px;background:#e9f1fa"></div>
<div class="t" style="left:36.0px;top:358.99px;height:13.0px;line-height:13.0px;font-size:6.5px;color:#222;font-weight:normal;">Détecteur de présence IR plafond 360<span style="font-size:5px;vertical-align:1.2px">°</span></div>
<div class="a" style="left:177.2px;top:359.06px;width:46.20000000000002px;height:11.879999999999995px;background:#fffbe6"></div>
<div class="t" style="left:0.30000000000001137px;width:400px;text-align:center;top:358.99px;height:13.0px;line-height:13.0px;font-size:6.5px;color:#1a1aff;font-weight:normal;">60,00</div>
<div class="a" style="left:223.4px;top:359.06px;width:38.900000000000006px;height:11.879999999999995px;background:#fffbe6"></div>
<div class="t" style="left:42.85000000000002px;width:400px;text-align:center;top:358.99px;height:13.0px;line-height:13.0px;font-size:6.5px;color:#1a1aff;font-weight:normal;">1,00</div>
<div class="a" style="left:262.3px;top:359.06px;width:29.30000000000001px;height:11.879999999999995px;background:#e9f1fa"></div>
<div class="t" style="left:76.95000000000005px;width:400px;text-align:center;top:358.99px;height:13.0px;line-height:13.0px;font-size:6.5px;color:#222;font-weight:normal;">U</div>
<div class="a" style="left:291.6px;top:359.06px;width:45.799999999999955px;height:11.879999999999995px;background:#e9f1fa"></div>
<div class="t" style="left:114.5px;width:400px;text-align:center;top:358.99px;height:13.0px;line-height:13.0px;font-size:6.5px;color:#2a922a;font-weight:normal;">60,00</div>
<div class="a" style="left:337.4px;top:359.06px;width:43.0px;height:11.879999999999995px;background:#fffbe6"></div>
<div class="t" style="left:-21.600000000000023px;width:400px;text-align:right;top:358.99px;height:13.0px;line-height:13.0px;font-size:6.5px;color:#1a1aff;font-weight:normal;">65,00 €</div>
<div class="a" style="left:380.4px;top:359.06px;width:49.60000000000002px;height:11.879999999999995px;background:#e9f1fa"></div>
<div class="t" style="left:28px;width:400px;text-align:right;top:358.99px;height:13.0px;line-height:13.0px;font-size:6.5px;color:#222;font-weight:normal;">3 900,00 €</div>
<div class="a" style="left:430px;top:359.06px;width:64.5px;height:11.879999999999995px;background:#e9f1fa"></div>
<div class="a" style="left:13.4px;top:370.94px;width:20.9px;height:11.879999999999995px;background:#ffffff"></div>
<div class="t" style="left:-176.15px;width:400px;text-align:center;top:370.87px;height:13.0px;line-height:13.0px;font-size:6.5px;color:#222;font-weight:normal;">E.14</div>
<div class="a" style="left:34.3px;top:370.94px;width:142.89999999999998px;height:11.879999999999995px;background:#ffffff"></div>
<div class="t" style="left:36.0px;top:370.87px;height:13.0px;line-height:13.0px;font-size:6.5px;color:#222;font-weight:normal;">BAES éclairage sécurité 45lm 1h</div>
<div class="a" style="left:177.2px;top:370.94px;width:46.20000000000002px;height:11.879999999999995px;background:#fffbe6"></div>
<div class="t" style="left:0.30000000000001137px;width:400px;text-align:center;top:370.87px;height:13.0px;line-height:13.0px;font-size:6.5px;color:#1a1aff;font-weight:normal;">80,00</div>
<div class="a" style="left:223.4px;top:370.94px;width:38.900000000000006px;height:11.879999999999995px;background:#fffbe6"></div>
<div class="t" style="left:42.85000000000002px;width:400px;text-align:center;top:370.87px;height:13.0px;line-height:13.0px;font-size:6.5px;color:#1a1aff;font-weight:normal;">1,00</div>
<div class="a" style="left:262.3px;top:370.94px;width:29.30000000000001px;height:11.879999999999995px;background:#ffffff"></div>
<div class="t" style="left:76.95000000000005px;width:400px;text-align:center;top:370.87px;height:13.0px;line-height:13.0px;font-size:6.5px;color:#222;font-weight:normal;">U</div>
<div class="a" style="left:291.6px;top:370.94px;width:45.799999999999955px;height:11.879999999999995px;background:#ffffff"></div>
<div class="t" style="left:114.5px;width:400px;text-align:center;top:370.87px;height:13.0px;line-height:13.0px;font-size:6.5px;color:#2a922a;font-weight:normal;">80,00</div>
<div class="a" style="left:337.4px;top:370.94px;width:43.0px;height:11.879999999999995px;background:#fffbe6"></div>
<div class="t" style="left:-21.600000000000023px;width:400px;text-align:right;top:370.87px;height:13.0px;line-height:13.0px;font-size:6.5px;color:#1a1aff;font-weight:normal;">55,00 €</div>
<div class="a" style="left:380.4px;top:370.94px;width:49.60000000000002px;height:11.879999999999995px;background:#ffffff"></div>
<div class="t" style="left:28px;width:400px;text-align:right;top:370.87px;height:13.0px;line-height:13.0px;font-size:6.5px;color:#222;font-weight:normal;">4 400,00 €</div>
<div class="a" style="left:430px;top:370.94px;width:64.5px;height:11.879999999999995px;background:#ffffff"></div>
<div class="t" style="left:431.2px;top:370.87px;height:13.0px;line-height:13.0px;font-size:6.5px;color:#222;font-weight:normal;">NF C 71-800</div>
<div class="a" style="left:33.8px;top:178.0px;width:1.0px;height:12.889999999999986px;background:#d2d2d2"></div>
<div class="a" style="left:176.7px;top:178.0px;width:1.0px;height:12.889999999999986px;background:#d2d2d2"></div>
<div class="a" style="left:222.9px;top:178.0px;width:1.0px;height:12.889999999999986px;background:#d2d2d2"></div>
<div class="a" style="left:261.8px;top:178.0px;width:1.0px;height:12.889999999999986px;background:#d2d2d2"></div>
<div class="a" style="left:291.1px;top:178.0px;width:1.0px;height:12.889999999999986px;background:#d2d2d2"></div>
<div class="a" style="left:336.9px;top:178.0px;width:1.0px;height:12.889999999999986px;background:#d2d2d2"></div>
<div class="a" style="left:379.9px;top:178.0px;width:1.0px;height:12.889999999999986px;background:#d2d2d2"></div>
<div class="a" style="left:429.5px;top:178.0px;width:1.0px;height:12.889999999999986px;background:#d2d2d2"></div>
<div class="a" style="left:494.0px;top:178.0px;width:1.0px;height:12.889999999999986px;background:#d2d2d2"></div>
<div class="a" style="left:13.4px;top:190.08999999999997px;width:481.1px;height:1.0px;background:#d2d2d2"></div>
<div class="a" style="left:33.8px;top:189.89px;width:1.0px;height:12.889999999999986px;background:#d2d2d2"></div>
<div class="a" style="left:176.7px;top:189.89px;width:1.0px;height:12.889999999999986px;background:#d2d2d2"></div>
<div class="a" style="left:222.9px;top:189.89px;width:1.0px;height:12.889999999999986px;background:#d2d2d2"></div>
<div class="a" style="left:261.8px;top:189.89px;width:1.0px;height:12.889999999999986px;background:#d2d2d2"></div>
<div class="a" style="left:291.1px;top:189.89px;width:1.0px;height:12.889999999999986px;background:#d2d2d2"></div>
<div class="a" style="left:336.9px;top:189.89px;width:1.0px;height:12.889999999999986px;background:#d2d2d2"></div>
<div class="a" style="left:379.9px;top:189.89px;width:1.0px;height:12.889999999999986px;background:#d2d2d2"></div>
<div class="a" style="left:429.5px;top:189.89px;width:1.0px;height:12.889999999999986px;background:#d2d2d2"></div>
<div class="a" style="left:494.0px;top:189.89px;width:1.0px;height:12.889999999999986px;background:#d2d2d2"></div>
<div class="a" style="left:13.4px;top:201.97999999999996px;width:481.1px;height:1.0px;background:#d2d2d2"></div>
<div class="a" style="left:33.8px;top:201.77999999999997px;width:1.0px;height:12.889999999999986px;background:#d2d2d2"></div>
<div class="a" style="left:176.7px;top:201.77999999999997px;width:1.0px;height:12.889999999999986px;background:#d2d2d2"></div>
<div class="a" style="left:222.9px;top:201.77999999999997px;width:1.0px;height:12.889999999999986px;background:#d2d2d2"></div>
<div class="a" style="left:261.8px;top:201.77999999999997px;width:1.0px;height:12.889999999999986px;background:#d2d2d2"></div>
<div class="a" style="left:291.1px;top:201.77999999999997px;width:1.0px;height:12.889999999999986px;background:#d2d2d2"></div>
<div class="a" style="left:336.9px;top:201.77999999999997px;width:1.0px;height:12.889999999999986px;background:#d2d2d2"></div>
<div class="a" style="left:379.9px;top:201.77999999999997px;width:1.0px;height:12.889999999999986px;background:#d2d2d2"></div>
<div class="a" style="left:429.5px;top:201.77999999999997px;width:1.0px;height:12.889999999999986px;background:#d2d2d2"></div>
<div class="a" style="left:494.0px;top:201.77999999999997px;width:1.0px;height:12.889999999999986px;background:#d2d2d2"></div>
<div class="a" style="left:13.4px;top:213.86999999999995px;width:481.1px;height:1.0px;background:#d2d2d2"></div>
<div class="a" style="left:33.8px;top:213.66999999999996px;width:1.0px;height:12.889999999999986px;background:#d2d2d2"></div>
<div class="a" style="left:176.7px;top:213.66999999999996px;width:1.0px;height:12.889999999999986px;background:#d2d2d2"></div>
<div class="a" style="left:222.9px;top:213.66999999999996px;width:1.0px;height:12.889999999999986px;background:#d2d2d2"></div>
<div class="a" style="left:261.8px;top:213.66999999999996px;width:1.0px;height:12.889999999999986px;background:#d2d2d2"></div>
<div class="a" style="left:291.1px;top:213.66999999999996px;width:1.0px;height:12.889999999999986px;background:#d2d2d2"></div>
<div class="a" style="left:336.9px;top:213.66999999999996px;width:1.0px;height:12.889999999999986px;background:#d2d2d2"></div>
<div class="a" style="left:379.9px;top:213.66999999999996px;width:1.0px;height:12.889999999999986px;background:#d2d2d2"></div>
<div class="a" style="left:429.5px;top:213.66999999999996px;width:1.0px;height:12.889999999999986px;background:#d2d2d2"></div>
<div class="a" style="left:494.0px;top:213.66999999999996px;width:1.0px;height:12.889999999999986px;background:#d2d2d2"></div>
<div class="a" style="left:13.4px;top:225.75999999999993px;width:481.1px;height:1.0px;background:#d2d2d2"></div>
<div class="a" style="left:33.8px;top:225.55999999999995px;width:1.0px;height:12.889999999999986px;background:#d2d2d2"></div>
<div class="a" style="left:176.7px;top:225.55999999999995px;width:1.0px;height:12.889999999999986px;background:#d2d2d2"></div>
<div class="a" style="left:222.9px;top:225.55999999999995px;width:1.0px;height:12.889999999999986px;background:#d2d2d2"></div>
<div class="a" style="left:261.8px;top:225.55999999999995px;width:1.0px;height:12.889999999999986px;background:#d2d2d2"></div>
<div class="a" style="left:291.1px;top:225.55999999999995px;width:1.0px;height:12.889999999999986px;background:#d2d2d2"></div>
<div class="a" style="left:336.9px;top:225.55999999999995px;width:1.0px;height:12.889999999999986px;background:#d2d2d2"></div>
<div class="a" style="left:379.9px;top:225.55999999999995px;width:1.0px;height:12.889999999999986px;background:#d2d2d2"></div>
<div class="a" style="left:429.5px;top:225.55999999999995px;width:1.0px;height:12.889999999999986px;background:#d2d2d2"></div>
<div class="a" style="left:494.0px;top:225.55999999999995px;width:1.0px;height:12.889999999999986px;background:#d2d2d2"></div>
<div class="a" style="left:13.4px;top:237.64999999999992px;width:481.1px;height:1.0px;background:#d2d2d2"></div>
<div class="a" style="left:33.8px;top:237.44999999999993px;width:1.0px;height:12.889999999999986px;background:#d2d2d2"></div>
<div class="a" style="left:176.7px;top:237.44999999999993px;width:1.0px;height:12.889999999999986px;background:#d2d2d2"></div>
<div class="a" style="left:222.9px;top:237.44999999999993px;width:1.0px;height:12.889999999999986px;background:#d2d2d2"></div>
<div class="a" style="left:261.8px;top:237.44999999999993px;width:1.0px;height:12.889999999999986px;background:#d2d2d2"></div>
<div class="a" style="left:291.1px;top:237.44999999999993px;width:1.0px;height:12.889999999999986px;background:#d2d2d2"></div>
<div class="a" style="left:336.9px;top:237.44999999999993px;width:1.0px;height:12.889999999999986px;background:#d2d2d2"></div>
<div class="a" style="left:379.9px;top:237.44999999999993px;width:1.0px;height:12.889999999999986px;background:#d2d2d2"></div>
<div class="a" style="left:429.5px;top:237.44999999999993px;width:1.0px;height:12.889999999999986px;background:#d2d2d2"></div>
<div class="a" style="left:494.0px;top:237.44999999999993px;width:1.0px;height:12.889999999999986px;background:#d2d2d2"></div>
<div class="a" style="left:13.4px;top:249.5399999999999px;width:481.1px;height:1.0px;background:#d2d2d2"></div>
<div class="a" style="left:33.8px;top:249.33999999999992px;width:1.0px;height:12.889999999999986px;background:#d2d2d2"></div>
<div class="a" style="left:176.7px;top:249.33999999999992px;width:1.0px;height:12.889999999999986px;background:#d2d2d2"></div>
<div class="a" style="left:222.9px;top:249.33999999999992px;width:1.0px;height:12.889999999999986px;background:#d2d2d2"></div>
<div class="a" style="left:261.8px;top:249.33999999999992px;width:1.0px;height:12.889999999999986px;background:#d2d2d2"></div>
<div class="a" style="left:291.1px;top:249.33999999999992px;width:1.0px;height:12.889999999999986px;background:#d2d2d2"></div>
<div class="a" style="left:336.9px;top:249.33999999999992px;width:1.0px;height:12.889999999999986px;background:#d2d2d2"></div>
<div class="a" style="left:379.9px;top:249.33999999999992px;width:1.0px;height:12.889999999999986px;background:#d2d2d2"></div>
<div class="a" style="left:429.5px;top:249.33999999999992px;width:1.0px;height:12.889999999999986px;background:#d2d2d2"></div>
<div class="a" style="left:494.0px;top:249.33999999999992px;width:1.0px;height:12.889999999999986px;background:#d2d2d2"></div>
<div class="a" style="left:13.4px;top:261.4299999999999px;width:481.1px;height:1.0px;background:#d2d2d2"></div>
<div class="a" style="left:33.8px;top:261.2299999999999px;width:1.0px;height:12.889999999999986px;background:#d2d2d2"></div>
<div class="a" style="left:176.7px;top:261.2299999999999px;width:1.0px;height:12.889999999999986px;background:#d2d2d2"></div>
<div class="a" style="left:222.9px;top:261.2299999999999px;width:1.0px;height:12.889999999999986px;background:#d2d2d2"></div>
<div class="a" style="left:261.8px;top:261.2299999999999px;width:1.0px;height:12.889999999999986px;background:#d2d2d2"></div>
<div class="a" style="left:291.1px;top:261.2299999999999px;width:1.0px;height:12.889999999999986px;background:#d2d2d2"></div>
<div class="a" style="left:336.9px;top:261.2299999999999px;width:1.0px;height:12.889999999999986px;background:#d2d2d2"></div>
<div class="a" style="left:379.9px;top:261.2299999999999px;width:1.0px;height:12.889999999999986px;background:#d2d2d2"></div>
<div class="a" style="left:429.5px;top:261.2299999999999px;width:1.0px;height:12.889999999999986px;background:#d2d2d2"></div>
<div class="a" style="left:494.0px;top:261.2299999999999px;width:1.0px;height:12.889999999999986px;background:#d2d2d2"></div>
<div class="a" style="left:13.4px;top:273.3199999999999px;width:481.1px;height:1.0px;background:#d2d2d2"></div>
<div class="a" style="left:33.8px;top:273.1199999999999px;width:1.0px;height:12.889999999999986px;background:#d2d2d2"></div>
<div class="a" style="left:176.7px;top:273.1199999999999px;width:1.0px;height:12.889999999999986px;background:#d2d2d2"></div>
<div class="a" style="left:222.9px;top:273.1199999999999px;width:1.0px;height:12.889999999999986px;background:#d2d2d2"></div>
<div class="a" style="left:261.8px;top:273.1199999999999px;width:1.0px;height:12.889999999999986px;background:#d2d2d2"></div>
<div class="a" style="left:291.1px;top:273.1199999999999px;width:1.0px;height:12.889999999999986px;background:#d2d2d2"></div>
<div class="a" style="left:336.9px;top:273.1199999999999px;width:1.0px;height:12.889999999999986px;background:#d2d2d2"></div>
<div class="a" style="left:379.9px;top:273.1199999999999px;width:1.0px;height:12.889999999999986px;background:#d2d2d2"></div>
<div class="a" style="left:429.5px;top:273.1199999999999px;width:1.0px;height:12.889999999999986px;background:#d2d2d2"></div>
<div class="a" style="left:494.0px;top:273.1199999999999px;width:1.0px;height:12.889999999999986px;background:#d2d2d2"></div>
<div class="a" style="left:13.4px;top:285.20999999999987px;width:481.1px;height:1.0px;background:#d2d2d2"></div>
<div class="a" style="left:33.8px;top:285.0099999999999px;width:1.0px;height:12.889999999999986px;background:#d2d2d2"></div>
<div class="a" style="left:176.7px;top:285.0099999999999px;width:1.0px;height:12.889999999999986px;background:#d2d2d2"></div>
<div class="a" style="left:222.9px;top:285.0099999999999px;width:1.0px;height:12.889999999999986px;background:#d2d2d2"></div>
<div class="a" style="left:261.8px;top:285.0099999999999px;width:1.0px;height:12.889999999999986px;background:#d2d2d2"></div>
<div class="a" style="left:291.1px;top:285.0099999999999px;width:1.0px;height:12.889999999999986px;background:#d2d2d2"></div>
<div class="a" style="left:336.9px;top:285.0099999999999px;width:1.0px;height:12.889999999999986px;background:#d2d2d2"></div>
<div class="a" style="left:379.9px;top:285.0099999999999px;width:1.0px;height:12.889999999999986px;background:#d2d2d2"></div>
<div class="a" style="left:429.5px;top:285.0099999999999px;width:1.0px;height:12.889999999999986px;background:#d2d2d2"></div>
<div class="a" style="left:494.0px;top:285.0099999999999px;width:1.0px;height:12.889999999999986px;background:#d2d2d2"></div>
<div class="a" style="left:13.4px;top:297.09999999999985px;width:481.1px;height:1.0px;background:#d2d2d2"></div>
<div class="a" style="left:33.8px;top:334.8px;width:1.0px;height:12.879999999999995px;background:#d2d2d2"></div>
<div class="a" style="left:176.7px;top:334.8px;width:1.0px;height:12.879999999999995px;background:#d2d2d2"></div>
<div class="a" style="left:222.9px;top:334.8px;width:1.0px;height:12.879999999999995px;background:#d2d2d2"></div>
<div class="a" style="left:261.8px;top:334.8px;width:1.0px;height:12.879999999999995px;background:#d2d2d2"></div>
<div class="a" style="left:291.1px;top:334.8px;width:1.0px;height:12.879999999999995px;background:#d2d2d2"></div>
<div class="a" style="left:336.9px;top:334.8px;width:1.0px;height:12.879999999999995px;background:#d2d2d2"></div>
<div class="a" style="left:379.9px;top:334.8px;width:1.0px;height:12.879999999999995px;background:#d2d2d2"></div>
<div class="a" style="left:429.5px;top:334.8px;width:1.0px;height:12.879999999999995px;background:#d2d2d2"></div>
<div class="a" style="left:494.0px;top:334.8px;width:1.0px;height:12.879999999999995px;background:#d2d2d2"></div>
<div class="a" style="left:13.4px;top:346.88px;width:481.1px;height:1.0px;background:#d2d2d2"></div>
<div class="a" style="left:33.8px;top:346.68px;width:1.0px;height:12.879999999999995px;background:#d2d2d2"></div>
<div class="a" style="left:176.7px;top:346.68px;width:1.0px;height:12.879999999999995px;background:#d2d2d2"></div>
<div class="a" style="left:222.9px;top:346.68px;width:1.0px;height:12.879999999999995px;background:#d2d2d2"></div>
<div class="a" style="left:261.8px;top:346.68px;width:1.0px;height:12.879999999999995px;background:#d2d2d2"></div>
<div class="a" style="left:291.1px;top:346.68px;width:1.0px;height:12.879999999999995px;background:#d2d2d2"></div>
<div class="a" style="left:336.9px;top:346.68px;width:1.0px;height:12.879999999999995px;background:#d2d2d2"></div>
<div class="a" style="left:379.9px;top:346.68px;width:1.0px;height:12.879999999999995px;background:#d2d2d2"></div>
<div class="a" style="left:429.5px;top:346.68px;width:1.0px;height:12.879999999999995px;background:#d2d2d2"></div>
<div class="a" style="left:494.0px;top:346.68px;width:1.0px;height:12.879999999999995px;background:#d2d2d2"></div>
<div class="a" style="left:13.4px;top:358.76px;width:481.1px;height:1.0px;background:#d2d2d2"></div>
<div class="a" style="left:33.8px;top:358.56px;width:1.0px;height:12.879999999999995px;background:#d2d2d2"></div>
<div class="a" style="left:176.7px;top:358.56px;width:1.0px;height:12.879999999999995px;background:#d2d2d2"></div>
<div class="a" style="left:222.9px;top:358.56px;width:1.0px;height:12.879999999999995px;background:#d2d2d2"></div>
<div class="a" style="left:261.8px;top:358.56px;width:1.0px;height:12.879999999999995px;background:#d2d2d2"></div>
<div class="a" style="left:291.1px;top:358.56px;width:1.0px;height:12.879999999999995px;background:#d2d2d2"></div>
<div class="a" style="left:336.9px;top:358.56px;width:1.0px;height:12.879999999999995px;background:#d2d2d2"></div>
<div class="a" style="left:379.9px;top:358.56px;width:1.0px;height:12.879999999999995px;background:#d2d2d2"></div>
<div class="a" style="left:429.5px;top:358.56px;width:1.0px;height:12.879999999999995px;background:#d2d2d2"></div>
<div class="a" style="left:494.0px;top:358.56px;width:1.0px;height:12.879999999999995px;background:#d2d2d2"></div>
<div class="a" style="left:13.4px;top:370.64px;width:481.1px;height:1.0px;background:#d2d2d2"></div>
<div class="a" style="left:33.8px;top:370.44px;width:1.0px;height:12.879999999999995px;background:#d2d2d2"></div>
<div class="a" style="left:176.7px;top:370.44px;width:1.0px;height:12.879999999999995px;background:#d2d2d2"></div>
<div class="a" style="left:222.9px;top:370.44px;width:1.0px;height:12.879999999999995px;background:#d2d2d2"></div>
<div class="a" style="left:261.8px;top:370.44px;width:1.0px;height:12.879999999999995px;background:#d2d2d2"></div>
<div class="a" style="left:291.1px;top:370.44px;width:1.0px;height:12.879999999999995px;background:#d2d2d2"></div>
<div class="a" style="left:336.9px;top:370.44px;width:1.0px;height:12.879999999999995px;background:#d2d2d2"></div>
<div class="a" style="left:379.9px;top:370.44px;width:1.0px;height:12.879999999999995px;background:#d2d2d2"></div>
<div class="a" style="left:429.5px;top:370.44px;width:1.0px;height:12.879999999999995px;background:#d2d2d2"></div>
<div class="a" style="left:494.0px;top:370.44px;width:1.0px;height:12.879999999999995px;background:#d2d2d2"></div>
<div class="a" style="left:13.4px;top:382.52px;width:481.1px;height:1.0px;background:#d2d2d2"></div>
<div class="a" style="left:13px;top:297.3px;width:417.5px;height:13.899999999999977px;background:#ffd966;border:1px solid #4a5a78"></div>
<div class="a" style="left:380px;top:297.3px;width:1px;height:13.899999999999977px;background:#4a5a78"></div>
<div class="t" style="left:-21.69999999999999px;width:400px;text-align:right;top:298.68px;height:13.04px;line-height:13.04px;font-size:6.52px;color:#000;font-weight:bold;">SOUS-TOTAL DISTRIBUTION HTA/BTA</div>
<div class="t" style="left:29px;width:400px;text-align:right;top:298.7px;height:13.0px;line-height:13.0px;font-size:6.5px;color:#000;font-weight:bold;">66 884,50 €</div>
<div class="a" style="left:13.4px;top:321.2px;width:481.1px;height:14.600000000000023px;background:#2e75b6"></div>
<svg class="a" style="left:14.5px;top:325.8px" width="6" height="6"><polygon points="0.2,0.2 5.8,2.8 0.2,5.4" fill="#fff"/></svg>
<div class="t" style="left:25px;top:321.6px;height:14.4px;line-height:14.4px;font-size:7.2px;color:#fff;font-weight:bold;">ÉCLAIRAGE</div>
<div class="a" style="left:12.2px;top:107.6px;width:482.7px;height:26.099999999999994px;border:1.8px solid #5e9e74"></div>
<div class="a" style="left:493.2px;top:131.8px;width:2.6000000000000227px;height:2.5999999999999943px;background:#1e6a3e"></div>
<div class="a" style="left:0px;top:77px;width:760px;height:22px;background:#e6e6e6"></div>
<div class="a" style="left:0px;top:99px;width:750px;height:8.5px;background:#e9e9e9"></div>
<div class="a" style="left:13px;top:99px;width:481.5px;height:8.5px;background:#d4d4d4"></div>
<div class="a" style="left:13px;top:106.8px;width:481.5px;height:0.7999999999999972px;background:#f2f0f0"></div>
<div class="t" style="left:-176.15px;width:400px;text-align:center;top:97.89999999999999px;height:12.4px;line-height:12.4px;font-size:6.2px;color:#2a6e48;font-weight:normal;-webkit-text-stroke:0.12px currentColor">A</div>
<div class="a" style="left:33.8px;top:100px;width:1.0px;height:7px;background:#c6c6c6"></div>
<div class="t" style="left:-94.25px;width:400px;text-align:center;top:97.89999999999999px;height:12.4px;line-height:12.4px;font-size:6.2px;color:#2a6e48;font-weight:normal;-webkit-text-stroke:0.12px currentColor">B</div>
<div class="a" style="left:176.7px;top:100px;width:1.0px;height:7px;background:#c6c6c6"></div>
<div class="t" style="left:0.30000000000001137px;width:400px;text-align:center;top:97.89999999999999px;height:12.4px;line-height:12.4px;font-size:6.2px;color:#2a6e48;font-weight:normal;-webkit-text-stroke:0.12px currentColor">C</div>
<div class="a" style="left:222.9px;top:100px;width:1.0px;height:7px;background:#c6c6c6"></div>
<div class="t" style="left:42.85000000000002px;width:400px;text-align:center;top:97.89999999999999px;height:12.4px;line-height:12.4px;font-size:6.2px;color:#2a6e48;font-weight:normal;-webkit-text-stroke:0.12px currentColor">D</div>
<div class="a" style="left:261.8px;top:100px;width:1.0px;height:7px;background:#c6c6c6"></div>
<div class="t" style="left:76.95000000000005px;width:400px;text-align:center;top:97.89999999999999px;height:12.4px;line-height:12.4px;font-size:6.2px;color:#2a6e48;font-weight:normal;-webkit-text-stroke:0.12px currentColor">E</div>
<div class="a" style="left:291.1px;top:100px;width:1.0px;height:7px;background:#c6c6c6"></div>
<div class="t" style="left:114.5px;width:400px;text-align:center;top:97.89999999999999px;height:12.4px;line-height:12.4px;font-size:6.2px;color:#2a6e48;font-weight:normal;-webkit-text-stroke:0.12px currentColor">F</div>
<div class="a" style="left:336.9px;top:100px;width:1.0px;height:7px;background:#c6c6c6"></div>
<div class="t" style="left:158.89999999999998px;width:400px;text-align:center;top:97.89999999999999px;height:12.4px;line-height:12.4px;font-size:6.2px;color:#2a6e48;font-weight:normal;-webkit-text-stroke:0.12px currentColor">G</div>
<div class="a" style="left:379.9px;top:100px;width:1.0px;height:7px;background:#c6c6c6"></div>
<div class="t" style="left:205.2px;width:400px;text-align:center;top:97.89999999999999px;height:12.4px;line-height:12.4px;font-size:6.2px;color:#2a6e48;font-weight:normal;-webkit-text-stroke:0.12px currentColor">H</div>
<div class="a" style="left:429.5px;top:100px;width:1.0px;height:7px;background:#c6c6c6"></div>
<div class="t" style="left:262.25px;width:400px;text-align:center;top:97.89999999999999px;height:12.4px;line-height:12.4px;font-size:6.2px;color:#2a6e48;font-weight:normal;-webkit-text-stroke:0.12px currentColor">I</div>
<div class="a" style="left:494.0px;top:100px;width:1.0px;height:7px;background:#c6c6c6"></div>
<div class="t" style="left:309.95px;width:400px;text-align:center;top:97.89999999999999px;height:12.4px;line-height:12.4px;font-size:6.2px;color:#333;font-weight:normal;-webkit-text-stroke:0.12px currentColor">J</div>
<div class="a" style="left:524.9px;top:100px;width:1.0px;height:7px;background:#c6c6c6"></div>
<div class="t" style="left:340.8499999999999px;width:400px;text-align:center;top:97.89999999999999px;height:12.4px;line-height:12.4px;font-size:6.2px;color:#333;font-weight:normal;-webkit-text-stroke:0.12px currentColor">K</div>
<div class="a" style="left:555.8px;top:100px;width:1.0px;height:7px;background:#c6c6c6"></div>
<div class="t" style="left:371.75px;width:400px;text-align:center;top:97.89999999999999px;height:12.4px;line-height:12.4px;font-size:6.2px;color:#333;font-weight:normal;-webkit-text-stroke:0.12px currentColor">L</div>
<div class="a" style="left:586.6999999999999px;top:100px;width:1.0px;height:7px;background:#c6c6c6"></div>
<div class="t" style="left:402.64999999999986px;width:400px;text-align:center;top:97.89999999999999px;height:12.4px;line-height:12.4px;font-size:6.2px;color:#333;font-weight:normal;-webkit-text-stroke:0.12px currentColor">M</div>
<div class="a" style="left:617.5999999999999px;top:100px;width:1.0px;height:7px;background:#c6c6c6"></div>
<div class="t" style="left:433.54999999999995px;width:400px;text-align:center;top:97.89999999999999px;height:12.4px;line-height:12.4px;font-size:6.2px;color:#333;font-weight:normal;-webkit-text-stroke:0.12px currentColor">N</div>
<div class="a" style="left:648.4999999999999px;top:100px;width:1.0px;height:7px;background:#c6c6c6"></div>
<div class="t" style="left:464.4499999999998px;width:400px;text-align:center;top:97.89999999999999px;height:12.4px;line-height:12.4px;font-size:6.2px;color:#333;font-weight:normal;-webkit-text-stroke:0.12px currentColor">O</div>
<div class="a" style="left:679.3999999999999px;top:100px;width:1.0px;height:7px;background:#c6c6c6"></div>
<div class="t" style="left:495.3499999999999px;width:400px;text-align:center;top:97.89999999999999px;height:12.4px;line-height:12.4px;font-size:6.2px;color:#333;font-weight:normal;-webkit-text-stroke:0.12px currentColor">P</div>
<div class="a" style="left:710.2999999999998px;top:100px;width:1.0px;height:7px;background:#c6c6c6"></div>
<div class="t" style="left:526.2499999999998px;width:400px;text-align:center;top:97.89999999999999px;height:12.4px;line-height:12.4px;font-size:6.2px;color:#333;font-weight:normal;-webkit-text-stroke:0.12px currentColor">Q</div>
<div class="a" style="left:741.1999999999998px;top:100px;width:1.0px;height:7px;background:#c6c6c6"></div>
<div class="a" style="left:0px;top:99px;width:13px;height:8.5px;background:#e9e9e9"></div>
<svg class="a" style="left:5px;top:100px" width="8" height="8"><polygon points="7,1 7,7 1,7" fill="#b4b4b4"/></svg>
<div class="a" style="left:12.5px;top:99px;width:1.0px;height:8px;background:#f0f0f0"></div>
<div class="a" style="left:12.5px;top:107px;width:1.0px;height:273px;background:#d6d6d6"></div>
<div class="a" style="left:0px;top:107.5px;width:13px;height:272.5px;background:#e9e9e9"></div>
<div class="a" style="left:0px;top:107.5px;width:13px;height:24.69999999999999px;background:#d4d4d4"></div>
<div class="a" style="left:12px;top:107.5px;width:1px;height:24.69999999999999px;background:#5e9e74"></div>
<div class="a" style="left:0px;top:131.7px;width:13px;height:1.0px;background:#d4d4d4"></div>
<div class="t" style="left:-193.4px;width:400px;text-align:center;top:121.89999999999999px;height:13.6px;line-height:13.6px;font-size:6.8px;color:#217346;font-weight:normal;">1</div>
<div class="a" style="left:0px;top:143.8px;width:13px;height:1.0px;background:#d4d4d4"></div>
<div class="t" style="left:-193.4px;width:400px;text-align:center;top:134.0px;height:13.6px;line-height:13.6px;font-size:6.8px;color:#3a3a3a;font-weight:normal;">2</div>
<div class="a" style="left:0px;top:163.5px;width:13px;height:1.0px;background:#d4d4d4"></div>
<div class="t" style="left:-193.4px;width:400px;text-align:center;top:153.7px;height:13.6px;line-height:13.6px;font-size:6.8px;color:#3a3a3a;font-weight:normal;">3</div>
<div class="a" style="left:0px;top:178.0px;width:13px;height:1.0px;background:#d4d4d4"></div>
<div class="t" style="left:-193.4px;width:400px;text-align:center;top:168.2px;height:13.6px;line-height:13.6px;font-size:6.8px;color:#3a3a3a;font-weight:normal;">4</div>
<div class="a" style="left:0px;top:189.89px;width:13px;height:1.0px;background:#d4d4d4"></div>
<div class="t" style="left:-193.4px;width:400px;text-align:center;top:180.08999999999997px;height:13.6px;line-height:13.6px;font-size:6.8px;color:#3a3a3a;font-weight:normal;">5</div>
<div class="a" style="left:0px;top:201.77999999999997px;width:13px;height:1.0px;background:#d4d4d4"></div>
<div class="t" style="left:-193.4px;width:400px;text-align:center;top:191.97999999999996px;height:13.6px;line-height:13.6px;font-size:6.8px;color:#3a3a3a;font-weight:normal;">6</div>
<div class="a" style="left:0px;top:213.66999999999996px;width:13px;height:1.0px;background:#d4d4d4"></div>
<div class="t" style="left:-193.4px;width:400px;text-align:center;top:203.86999999999995px;height:13.6px;line-height:13.6px;font-size:6.8px;color:#3a3a3a;font-weight:normal;">7</div>
<div class="a" style="left:0px;top:225.55999999999995px;width:13px;height:1.0px;background:#d4d4d4"></div>
<div class="t" style="left:-193.4px;width:400px;text-align:center;top:215.75999999999993px;height:13.6px;line-height:13.6px;font-size:6.8px;color:#3a3a3a;font-weight:normal;">8</div>
<div class="a" style="left:0px;top:237.44999999999993px;width:13px;height:1.0px;background:#d4d4d4"></div>
<div class="t" style="left:-193.4px;width:400px;text-align:center;top:227.64999999999992px;height:13.6px;line-height:13.6px;font-size:6.8px;color:#3a3a3a;font-weight:normal;">9</div>
<div class="a" style="left:0px;top:249.33999999999992px;width:13px;height:1.0px;background:#d4d4d4"></div>
<div class="t" style="left:-193.4px;width:400px;text-align:center;top:239.5399999999999px;height:13.6px;line-height:13.6px;font-size:6.8px;color:#3a3a3a;font-weight:normal;">10</div>
<div class="a" style="left:0px;top:261.2299999999999px;width:13px;height:1.0px;background:#d4d4d4"></div>
<div class="t" style="left:-193.4px;width:400px;text-align:center;top:251.4299999999999px;height:13.6px;line-height:13.6px;font-size:6.8px;color:#3a3a3a;font-weight:normal;">11</div>
<div class="a" style="left:0px;top:273.1199999999999px;width:13px;height:1.0px;background:#d4d4d4"></div>
<div class="t" style="left:-193.4px;width:400px;text-align:center;top:263.3199999999999px;height:13.6px;line-height:13.6px;font-size:6.8px;color:#3a3a3a;font-weight:normal;">12</div>
<div class="a" style="left:0px;top:285.0099999999999px;width:13px;height:1.0px;background:#d4d4d4"></div>
<div class="t" style="left:-193.4px;width:400px;text-align:center;top:275.20999999999987px;height:13.6px;line-height:13.6px;font-size:6.8px;color:#3a3a3a;font-weight:normal;">13</div>
<div class="a" style="left:0px;top:296.89999999999986px;width:13px;height:1.0px;background:#d4d4d4"></div>
<div class="t" style="left:-193.4px;width:400px;text-align:center;top:287.09999999999985px;height:13.6px;line-height:13.6px;font-size:6.8px;color:#3a3a3a;font-weight:normal;">14</div>
<div class="a" style="left:0px;top:310.7px;width:13px;height:1.0px;background:#d4d4d4"></div>
<div class="t" style="left:-193.4px;width:400px;text-align:center;top:300.9px;height:13.6px;line-height:13.6px;font-size:6.8px;color:#3a3a3a;font-weight:normal;">15</div>
<div class="a" style="left:0px;top:320.7px;width:13px;height:1.0px;background:#d4d4d4"></div>
<div class="t" style="left:-193.4px;width:400px;text-align:center;top:310.9px;height:13.6px;line-height:13.6px;font-size:6.8px;color:#3a3a3a;font-weight:normal;">16</div>
<div class="a" style="left:0px;top:335.3px;width:13px;height:1.0px;background:#d4d4d4"></div>
<div class="t" style="left:-193.4px;width:400px;text-align:center;top:325.5px;height:13.6px;line-height:13.6px;font-size:6.8px;color:#3a3a3a;font-weight:normal;">17</div>
<div class="a" style="left:0px;top:346.68px;width:13px;height:1.0px;background:#d4d4d4"></div>
<div class="t" style="left:-193.4px;width:400px;text-align:center;top:336.88px;height:13.6px;line-height:13.6px;font-size:6.8px;color:#3a3a3a;font-weight:normal;">18</div>
<div class="a" style="left:0px;top:358.56px;width:13px;height:1.0px;background:#d4d4d4"></div>
<div class="t" style="left:-193.4px;width:400px;text-align:center;top:348.76px;height:13.6px;line-height:13.6px;font-size:6.8px;color:#3a3a3a;font-weight:normal;">19</div>
<div class="a" style="left:0px;top:370.44px;width:13px;height:1.0px;background:#d4d4d4"></div>
<div class="t" style="left:-193.4px;width:400px;text-align:center;top:360.64px;height:13.6px;line-height:13.6px;font-size:6.8px;color:#3a3a3a;font-weight:normal;">20</div>
<div class="a" style="left:0px;top:382.32px;width:13px;height:1.0px;background:#d4d4d4"></div>
<div class="t" style="left:-193.4px;width:400px;text-align:center;top:372.52px;height:13.6px;line-height:13.6px;font-size:6.8px;color:#3a3a3a;font-weight:normal;">21</div>
<div class="a" style="left:750px;top:99px;width:10px;height:281px;background:#e9e9e9"></div>
<div class="a" style="left:751.5px;top:99.8px;width:7.100000000000023px;height:7.200000000000003px;background:#fff;border:0.6px solid #c8c8c8"></div>
<svg class="a" style="left:752px;top:101px" width="6" height="5"><polygon points="1,4 5,4 3,1.5" fill="#222"/></svg>
<div class="a" style="left:751.5px;top:107.7px;width:7.100000000000023px;height:7.599999999999994px;background:#fff;border:0.6px solid #c8c8c8"></div>
<div class="a" style="left:751.5px;top:374.2px;width:7.100000000000023px;height:6.5px;background:#fff;border:0.6px solid #c8c8c8"></div>
<svg class="a" style="left:752px;top:375px" width="6" height="5"><polygon points="1,1.5 5,1.5 3,4" fill="#222"/></svg>
<div class="a" style="left:0px;top:380px;width:760px;height:12.5px;background:#e6e6e6"></div>
<div class="a" style="left:0px;top:392.5px;width:760px;height:11.5px;background:#f3f3f3"></div>
<svg class="a" style="left:11px;top:384.5px" width="4" height="4"><polygon points="3.2,0.3 3.2,3.7 0.8,2" fill="#3c8a5c"/></svg>
<svg class="a" style="left:23.8px;top:384.5px" width="4" height="4"><polygon points="0.8,0.3 0.8,3.7 3.2,2" fill="#3c8a5c"/></svg>
<div class="a" style="left:35px;top:386.5px;width:6px;height:0.8000000000000114px;background:#9cc4ab"></div>
<div class="a" style="left:44.2px;top:381.5px;width:0.5999999999999943px;height:9.5px;background:#c8c8c8"></div>
<svg class="a" style="left:51px;top:381.5px" width="9" height="9"><path d="M1 8 L1 1 L8 8 Z M2.5 6.5 L2.5 4.5 L4.5 6.5 Z" fill="none" stroke="#777" stroke-width="0.8"/></svg>
<div class="t" style="left:61.6px;top:380.1px;height:12.4px;line-height:12.4px;font-size:6.2px;color:#777;font-weight:normal;transform:translateY(0.8px) scaleY(1.12);">1. MÉTRÉ GROS ŒUVRE</div>
<div class="a" style="left:140px;top:381px;width:0.5999999999999943px;height:10px;background:#c8c8c8"></div>
<div class="a" style="left:140.5px;top:380px;width:92.0px;height:12px;background:#fff;box-shadow:0 0 1px #aaa"></div>
<div class="a" style="left:140.5px;top:390.8px;width:92.0px;height:1.1999999999999886px;background:#217346"></div>
<svg class="a" style="left:147px;top:382px" width="6" height="9"><polygon points="4,0.5 1,4.8 3,4.8 2,8.5 5,3.8 3,3.8" fill="#217346"/></svg>
<div class="t" style="left:156.6px;top:380.1px;height:12.4px;line-height:12.4px;font-size:6.2px;color:#217346;font-weight:bold;transform:translateY(0.8px) scaleY(1.12);">2. MÉTRÉ ÉLECTRICITÉ</div>
<svg class="a" style="left:239.5px;top:381.5px" width="9" height="9"><path d="M1.5 7.5 L6 3 M5 2 L7.5 4.5" stroke="#777" stroke-width="1.3" fill="none"/></svg>
<div class="t" style="left:249.7px;top:380.1px;height:12.4px;line-height:12.4px;font-size:6.2px;color:#777;font-weight:normal;transform:translateY(0.8px) scaleY(1.12);">3. MÉTRÉ PLOMBERIE</div>
<div class="a" style="left:321.7px;top:381px;width:0.6000000000000227px;height:10px;background:#c8c8c8"></div>
<svg class="a" style="left:328.5px;top:381.5px" width="9" height="9"><circle cx="4.5" cy="4.5" r="3.3" fill="none" stroke="#777" stroke-width="0.9"/><circle cx="3.5" cy="3.6" r="1" fill="#777"/></svg>
<div class="t" style="left:339.5px;top:380.1px;height:12.4px;line-height:12.4px;font-size:6.2px;color:#777;font-weight:normal;transform:translateY(0.8px) scaleY(1.12);">4. M</div>
<div class="t" style="left:353.3px;top:380.1px;height:12.4px;line-height:12.4px;font-size:6.2px;color:#217346;font-weight:normal;transform:translateY(0.8px) scaleY(1.12);">...</div>
<svg class="a" style="left:363.5px;top:381.5px" width="10" height="10"><circle cx="5" cy="5" r="3.8" fill="none" stroke="#888" stroke-width="0.8"/><path d="M5 3 V7 M3 5 H7" stroke="#888" stroke-width="0.8"/></svg>
<div class="a" style="left:380.3px;top:383.5px;width:0.8000000000000114px;height:0.8000000000000114px;background:#b0b0b0"></div>
<div class="a" style="left:380.3px;top:385.7px;width:0.8000000000000114px;height:0.8000000000000114px;background:#b0b0b0"></div>
<div class="a" style="left:380.3px;top:387.9px;width:0.8000000000000114px;height:0.8000000000000114px;background:#b0b0b0"></div>
<div class="a" style="left:387.8px;top:383.4px;width:7.199999999999989px;height:6.600000000000023px;background:#fff;border:0.6px solid #c8c8c8"></div>
<svg class="a" style="left:388.5px;top:384px" width="6" height="6"><polygon points="4,1 4,5 1.8,3" fill="#222"/></svg>
<div class="a" style="left:395px;top:383.4px;width:326.20000000000005px;height:6.600000000000023px;background:#fff;border:0.6px solid #c8c8c8"></div>
<div class="a" style="left:742.5px;top:383.4px;width:7.399999999999977px;height:6.600000000000023px;background:#fff;border:0.6px solid #c8c8c8"></div>
<svg class="a" style="left:743.5px;top:384px" width="6" height="6"><polygon points="2,1 2,5 4.2,3" fill="#222"/></svg>
<div class="t" style="left:5.5px;top:393.1px;height:10.4px;line-height:10.4px;font-size:5.2px;color:#555;font-weight:normal;transform:translateY(0.8px) scaleY(1.12);">Prêt</div>
<svg class="a" style="left:25px;top:394.5px" width="8" height="8"><circle cx="3.5" cy="3.5" r="2.6" fill="none" stroke="#444" stroke-width="0.8"/><path d="M5.3 5.3 L7.5 7.5" stroke="#444" stroke-width="0.9"/></svg>
<div class="t" style="left:34px;top:393.3px;height:10.0px;line-height:10.0px;font-size:5.0px;color:#222;font-weight:bold;transform:translateY(0.8px) scaleY(1.12);">Accessibilité : consultez nos recommandations</div>
<div class="a" style="left:611px;top:393.8px;width:19px;height:10.199999999999989px;background:#d4d4d4"></div>
<svg class="a" style="left:616.5px;top:394.6px" width="9" height="8"><rect x="0.5" y="0.5" width="8" height="7" fill="none" stroke="#9a9a9a" stroke-width="0.7"/><path d="M3.2 0.5V7.5 M5.8 0.5V7.5 M0.5 2.8H8.5 M0.5 5.2H8.5" stroke="#9a9a9a" stroke-width="0.6"/></svg>
<svg class="a" style="left:635.5px;top:394.6px" width="9" height="8"><rect x="0.5" y="0.5" width="8" height="7" fill="none" stroke="#9a9a9a" stroke-width="0.7"/><rect x="2.5" y="2" width="4" height="4" fill="none" stroke="#9a9a9a" stroke-width="0.6"/></svg>
<svg class="a" style="left:655.5px;top:394.6px" width="9" height="8"><rect x="0.5" y="0.5" width="8" height="7" fill="none" stroke="#9a9a9a" stroke-width="0.7"/><path d="M0.5 4H5 V0.5" fill="none" stroke="#9a9a9a" stroke-width="0.6"/></svg>
<div class="a" style="left:672.5px;top:397.6px;width:4.0px;height:0.6999999999999886px;background:#555"></div>
<div class="a" style="left:679.8px;top:397.6px;width:50.200000000000045px;height:0.6999999999999886px;background:#999"></div>
<div class="a" style="left:703px;top:394.8px;width:2px;height:6.0px;background:#333"></div>
<div class="a" style="left:730.5px;top:397.6px;width:4.0px;height:0.6999999999999886px;background:#555"></div>
<div class="a" style="left:732.2px;top:395.8px;width:0.6999999999999318px;height:4.300000000000011px;background:#555"></div>
<div class="t" style="left:741.4px;top:392.7px;height:11.6px;line-height:11.6px;font-size:5.8px;color:#444;font-weight:normal;transform:translateY(0.8px) scaleY(1.12);">100 %</div>
<div class="a" style="left:2.6px;top:82.8px;width:49.6px;height:11.5px;background:#fff;border:0.7px solid #d6d6d6"></div>
<div class="t" style="left:5.1px;top:82.6px;height:12.4px;line-height:12.4px;font-size:6.2px;color:#444;font-weight:normal;transform:translateY(0.8px) scaleY(1.12);">A1</div>
<svg class="a" style="left:46px;top:87.5px" width="4" height="3"><polygon points="0.4,0.4 3.4,0.4 1.9,2.2" fill="#555"/></svg>
<div class="a" style="left:59.5px;top:85.8px;width:0.7999999999999972px;height:0.7999999999999972px;background:#c0c0c0"></div>
<div class="a" style="left:59.5px;top:87.8px;width:0.7999999999999972px;height:0.7999999999999972px;background:#c0c0c0"></div>
<div class="a" style="left:59.5px;top:89.8px;width:0.7999999999999972px;height:0.7999999999999972px;background:#c0c0c0"></div>
<div class="a" style="left:67.9px;top:82.8px;width:53.099999999999994px;height:11.5px;background:#fff;border:0.7px solid #d6d6d6"></div>
<svg class="a" style="left:72.5px;top:85.5px" width="7" height="7"><path d="M0.6 0.6 L6.4 6.4 M6.4 0.6 L0.6 6.4" stroke="#b8b8b8" stroke-width="0.6"/></svg>
<svg class="a" style="left:90.5px;top:85.5px" width="7" height="7"><path d="M0.5 3.6 L2.6 5.8 L6.5 1.2" stroke="#b8b8b8" stroke-width="0.6" fill="none"/></svg>
<div class="t" style="left:108.8px;top:83px;line-height:11px;font-size:7.5px;font-family:'Liberation Serif',serif;font-style:italic;color:#444">f<span style="font-size:6px">x</span></div>
<div class="a" style="left:122.3px;top:82.8px;width:635.3000000000001px;height:11.400000000000006px;background:#fff;border:0.7px solid #d6d6d6"></div>
<svg class="a" style="left:130.5px;top:84.5px" width="6" height="9"><polygon points="4,0.5 1,4.8 3,4.8 2,8.5 5,3.8 3,3.8" fill="#222"/></svg>
<div class="t" style="left:139.5px;top:83.2px;height:12.0px;line-height:12.0px;font-size:6.0px;color:#333;font-weight:normal;transform:translateY(0.8px) scaleY(1.12);">MÉTRÉ QUANTITATIF — ÉLECTRICITÉ CFO/CFA</div>
<svg class="a" style="left:750.8px;top:86.6px" width="6" height="4"><path d="M0.5 0.6 L2.8 3 L5.1 0.6" stroke="#444" stroke-width="0.75" fill="none"/></svg>
<div class="a" style="left:0px;top:0px;width:760px;height:32px;background:#217346"></div>
<svg class="a" style="left:500px;top:0px" width="260" height="32"><defs><clipPath id="cb"><circle cx="186.4" cy="26" r="29"/></clipPath></defs><g fill="#1c693d"><rect x="33" y="0" width="0.8" height="17"/><rect x="36" y="0" width="0.8" height="16"/><rect x="39" y="0" width="0.8" height="19"/><rect x="42" y="0" width="0.8" height="15"/><rect x="45.5" y="0" width="0.8" height="20"/><rect x="48.5" y="0" width="0.8" height="14"/><rect x="65" y="0" width="6" height="22"/><rect x="76" y="0" width="1" height="23"/><rect x="79.5" y="0" width="1" height="21"/><rect x="83" y="0" width="1" height="23"/><rect x="87" y="0" width="1" height="20"/><rect x="90.5" y="0" width="1" height="22"/><rect x="94" y="0" width="1" height="18"/><rect x="97.5" y="0" width="1" height="16"/></g><g fill="none" stroke="#1c693d"><circle cx="142" cy="15.4" r="8.5" stroke-width="4"/><circle cx="142" cy="15.4" r="2" stroke-width="1.2"/></g><circle cx="186.4" cy="26" r="29" fill="#1d6b3f"/><g clip-path="url(#cb)" stroke="#217346" stroke-width="2.2"><path d="M150 40 L200 -10 M157 44 L207 -6 M164 48 L214 -2 M171 52 L221 2 M178 56 L228 6"/></g><g stroke="#1c693d" stroke-width="2.6"><path d="M222 32 L260 -6 M230 32 L268 -6 M238 32 L276 -6"/></g></svg>
<svg class="a" style="left:10.2px;top:4.4px" width="7.4" height="7"><rect x="0" y="0" width="7.2" height="6.7" rx="0.3" fill="#fff"/><rect x="1.3" y="0.8" width="4.6" height="2.7" fill="#217346"/><rect x="2.1" y="4.8" width="1.9" height="1.5" fill="#217346"/></svg>
<svg class="a" style="left:24px;top:4px" width="16" height="8"><path d="M2 3.2 H6 A2.6 2.6 0 0 1 6 7.4 H4.5 M3.8 1.2 L1.8 3.2 L3.8 5.2" stroke="#86b898" stroke-width="1.1" fill="none"/><path d="M11.5 3.5 L13 5 L14.5 3.5" stroke="#7fb08f" stroke-width="0.6" fill="none"/></svg>
<svg class="a" style="left:42px;top:4px" width="16" height="8"><path d="M8 3.2 H4 A2.6 2.6 0 0 0 4 7.4 H5.5 M6.2 1.2 L8.2 3.2 L6.2 5.2" stroke="#86b898" stroke-width="1.1" fill="none"/><path d="M11.5 3.5 L13 5 L14.5 3.5" stroke="#7fb08f" stroke-width="0.6" fill="none"/></svg>
<svg class="a" style="left:62.5px;top:5px" width="5" height="6"><path d="M1 1 H4" stroke="#cfe3d6" stroke-width="0.6"/><polygon points="1,2.5 4,2.5 2.5,4.5" fill="#cfe3d6"/></svg>
<div class="t" style="left:290px;top:2.8000000000000007px;height:11.2px;line-height:11.2px;font-size:5.6px;color:#fff;font-weight:normal;transform:translateY(0.8px) scaleY(1.12);transform:none;letter-spacing:0.07px">01_METRE_AUTOMATIQUE&nbsp; - &nbsp;Excel (Échec de l'activation du produit)</div>
<div class="t" style="left:573.7px;top:3.3999999999999995px;height:9.6px;line-height:9.6px;font-size:4.8px;color:#fff;font-weight:normal;transform:translateY(0.8px) scaleY(1.12);">COFFI MARCELLIN HOUNGBÉDJI</div>
<svg class="a" style="left:651.9px;top:2px" width="12" height="12.5"><rect x="0" y="0" width="12" height="12.5" fill="#c9c9c9"/><circle cx="6" cy="5" r="2.6" fill="#fff"/><path d="M1.8 12.5 Q1.8 8.2 6 8.2 Q10.2 8.2 10.2 12.5 Z" fill="#fff"/></svg>
<svg class="a" style="left:676.5px;top:4.5px" width="9" height="7"><rect x="0.5" y="0.5" width="7.5" height="5.5" fill="none" stroke="#fff" stroke-width="0.7"/><rect x="0.5" y="0.5" width="7.5" height="1.3" fill="#fff"/><path d="M2.8 4.2 L4.25 2.8 L5.7 4.2" stroke="#fff" stroke-width="0.6" fill="none"/></svg>
<div class="a" style="left:701px;top:7.2px;width:5px;height:0.5999999999999996px;background:#fff"></div>
<svg class="a" style="left:722.5px;top:4.5px" width="7" height="7"><rect x="0.5" y="1.8" width="4.5" height="4.5" fill="none" stroke="#fff" stroke-width="0.7"/><path d="M1.8 1.8 V0.5 H6.3 V5 H5" fill="none" stroke="#fff" stroke-width="0.7"/></svg>
<svg class="a" style="left:745.5px;top:4.5px" width="7" height="7"><path d="M0.6 0.6 L6.2 6.2 M6.2 0.6 L0.6 6.2" stroke="#fff" stroke-width="0.7"/></svg>
<div class="a" style="left:709.5px;top:18px;width:44.5px;height:12.8px;border:0.8px solid #a9cbb5"></div>
<svg class="a" style="left:711.5px;top:21.5px" width="7" height="7"><path d="M0.6 3 V6.3 H6 V3.2 M0.6 3 L3.3 0.6 L4.2 1.4 M2.6 4.2 Q3.5 2.2 6.4 2.2 M5.2 1 L6.4 2.2 L5.2 3.4" fill="none" stroke="#fff" stroke-width="0.6"/></svg>
<div class="t" style="left:719.8px;top:18.6px;height:12.8px;line-height:12.8px;font-size:6.4px;color:#fff;font-weight:bold;transform:translateY(0.8px) scaleY(1.12);">Partager</div>
<svg class="a" style="left:748.6px;top:23px" width="5" height="4"><path d="M0.5 0.8 L2.5 2.8 L4.5 0.8" stroke="#fff" stroke-width="0.7" fill="none"/></svg>
<div class="a" style="left:31px;top:17px;width:29px;height:15px;background:#f3f3f3"></div>
<div class="t" style="left:6.4px;top:17.9px;height:12.0px;line-height:12.0px;font-size:6.0px;color:#fff;font-weight:normal;transform:translateY(0.8px) scaleY(1.12);">Fichier</div>
<div class="t" style="left:35.5px;top:17.9px;height:12.0px;line-height:12.0px;font-size:6.0px;color:#217346;font-weight:normal;transform:translateY(0.8px) scaleY(1.12);">Accueil</div>
<div class="t" style="left:65.7px;top:17.9px;height:12.0px;line-height:12.0px;font-size:6.0px;color:#fff;font-weight:normal;transform:translateY(0.8px) scaleY(1.12);">Insertion</div>
<div class="t" style="left:99.4px;top:17.9px;height:12.0px;line-height:12.0px;font-size:6.0px;color:#fff;font-weight:normal;transform:translateY(0.8px) scaleY(1.12);">Mise en page</div>
<div class="t" style="left:145.8px;top:17.9px;height:12.0px;line-height:12.0px;font-size:6.0px;color:#fff;font-weight:normal;transform:translateY(0.8px) scaleY(1.12);">Formules</div>
<div class="t" style="left:180.5px;top:17.9px;height:12.0px;line-height:12.0px;font-size:6.0px;color:#fff;font-weight:normal;transform:translateY(0.8px) scaleY(1.12);">Données</div>
<div class="t" style="left:214.7px;top:17.9px;height:12.0px;line-height:12.0px;font-size:6.0px;color:#fff;font-weight:normal;transform:translateY(0.8px) scaleY(1.12);">Révision</div>
<div class="t" style="left:247px;top:17.9px;height:12.0px;line-height:12.0px;font-size:6.0px;color:#fff;font-weight:normal;transform:translateY(0.8px) scaleY(1.12);">Affichage</div>
<div class="t" style="left:284px;top:17.9px;height:12.0px;line-height:12.0px;font-size:6.0px;color:#fff;font-weight:normal;transform:translateY(0.8px) scaleY(1.12);">Aide</div>
<div class="t" style="left:306.8px;top:17.9px;height:12.0px;line-height:12.0px;font-size:6.0px;color:#fff;font-weight:normal;transform:translateY(0.8px) scaleY(1.12);">Acrobat</div>
<svg class="a" style="left:341.5px;top:19.5px" width="8" height="10"><path d="M4 1 A2.8 2.8 0 0 1 5.6 6.2 V7.5 H2.4 V6.2 A2.8 2.8 0 0 1 4 1 Z M2.8 8.8 H5.2" fill="none" stroke="#fff" stroke-width="0.7"/></svg>
<div class="t" style="left:354.2px;top:18.4px;height:11.8px;line-height:11.8px;font-size:5.9px;color:#fff;font-weight:normal;transform:translateY(0.8px) scaleY(1.12);">Rechercher des outils adaptés</div>
<div class="a" style="left:0px;top:32px;width:760px;height:45px;background:#f3f3f3"></div>
<div class="a" style="left:0px;top:76.5px;width:760px;height:0.5px;background:#e1e1e1"></div>
<svg class="a" style="left:8px;top:34.5px" width="16" height="17"><rect x="1.1" y="2.6" width="10.2" height="12.5" fill="#edc17a"/><path d="M3.6 3.6 V2.2 H5.2 L6.2 0.9 L7.2 2.2 H8.8 V3.6 Z" fill="#f3f3f3" stroke="#666" stroke-width="0.6"/><path d="M8 8.3 H12.2 L14.8 10.9 V16.3 H8 Z" fill="#fff" stroke="#777" stroke-width="0.6"/></svg>
<div class="t" style="left:6px;top:49.2px;height:12.0px;line-height:12.0px;font-size:6.0px;color:#333;font-weight:normal;transform:translateY(0.8px) scaleY(1.12);">Coller</div>
<svg class="a" style="left:11.8px;top:61.8px" width="4" height="3"><path d="M0.5 0.5 L2 2 L3.5 0.5" stroke="#444" stroke-width="0.6" fill="none"/></svg>
<svg class="a" style="left:27px;top:35px" width="7" height="8"><path d="M1.5 0.5 L4.8 5 M5 0.5 L1.7 5" stroke="#555" stroke-width="0.7"/><circle cx="1.8" cy="6.2" r="1.2" fill="none" stroke="#3b83c8" stroke-width="0.8"/><circle cx="5" cy="6.2" r="1.2" fill="none" stroke="#3b83c8" stroke-width="0.8"/></svg>
<svg class="a" style="left:26px;top:46px" width="9" height="8"><path d="M0.5 0.5 H3.6 L4.6 1.5 V6 H0.5 Z" fill="#fff" stroke="#888" stroke-width="0.5"/><path d="M1.3 2.5 H3.6 M1.3 3.7 H3.6" stroke="#7aa8d8" stroke-width="0.5"/><path d="M3.5 2 H6.8 L7.8 3 V7.6 H3.5 Z" fill="#fff" stroke="#888" stroke-width="0.5"/><path d="M4.4 4 H6.8 M4.4 5.2 H6.8 M4.4 6.4 H6.8" stroke="#7aa8d8" stroke-width="0.5"/></svg>
<svg class="a" style="left:39.5px;top:48.7px" width="4" height="3"><path d="M0.5 0.5 L2 2 L3.5 0.5" stroke="#444" stroke-width="0.6" fill="none"/></svg>
<svg class="a" style="left:27px;top:58.5px" width="8" height="7"><path d="M1 5.6 L4.2 2.6" stroke="#f0b450" stroke-width="2.4"/><path d="M4.8 2.6 L6.8 0.6" stroke="#555" stroke-width="1.1"/></svg>
<div class="t" style="left:4px;top:67.8px;height:10.8px;line-height:10.8px;font-size:5.4px;color:#444;font-weight:normal;transform:translateY(0.8px) scaleY(1.12);">Presse-papiers</div>
<svg class="a" style="left:46px;top:71px" width="5" height="5"><path d="M0.5 0.5 H4.5 V4.5 H0.5 Z" fill="none" stroke="#777" stroke-width="0.5"/><path d="M1.5 1.5 L3.8 3.8 M2.5 3.8 H3.8 V2.5" fill="none" stroke="#444" stroke-width="0.6"/></svg>
<div class="a" style="left:51.300000000000004px;top:34px;width:0.5999999999999943px;height:41px;background:#d0d0d0"></div>
<div class="a" style="left:55.2px;top:37.1px;width:56.8px;height:11.5px;background:#fff;border:0.6px solid #c6c6c6"></div>
<div class="t" style="left:57px;top:36.8px;height:12.0px;line-height:12.0px;font-size:6.0px;color:#333;font-weight:normal;transform:translateY(0.8px) scaleY(1.12);">Arial</div>
<svg class="a" style="left:107px;top:41.5px" width="4" height="3"><polygon points="0.3,0.5 3.7,0.5 2,2.5" fill="#444"/></svg>
<div class="a" style="left:113.2px;top:37.1px;width:24.39999999999999px;height:11.5px;background:#fff;border:0.6px solid #c6c6c6"></div>
<div class="t" style="left:114.5px;top:36.8px;height:12.0px;line-height:12.0px;font-size:6.0px;color:#333;font-weight:normal;transform:translateY(0.8px) scaleY(1.12);">13</div>
<svg class="a" style="left:133px;top:41.5px" width="4" height="3"><polygon points="0.3,0.5 3.7,0.5 2,2.5" fill="#444"/></svg>
<div class="t" style="left:141.5px;top:36.800000000000004px;height:12.8px;line-height:12.8px;font-size:6.4px;color:#555;font-weight:normal;transform:translateY(0.8px) scaleY(1.12);">A</div>
<svg class="a" style="left:146px;top:38.5px" width="3" height="3"><polygon points="0.2,2.5 2.8,2.5 1.5,0.3" fill="#2b79c2"/></svg>
<div class="t" style="left:153px;top:37.400000000000006px;height:11.6px;line-height:11.6px;font-size:5.8px;color:#555;font-weight:normal;transform:translateY(0.8px) scaleY(1.12);">A</div>
<svg class="a" style="left:157.5px;top:38.5px" width="3" height="3"><polygon points="0.2,0.5 2.8,0.5 1.5,2.5" fill="#2b79c2"/></svg>
<div class="a" style="left:55.3px;top:52.4px;width:11.100000000000009px;height:11.600000000000001px;background:#c8c8c8;border:0.6px solid #b0b0b0"></div>
<div class="t" style="left:-139.15px;width:400px;text-align:center;top:51.800000000000004px;height:12.8px;line-height:12.8px;font-size:6.4px;color:#333;font-weight:bold;transform:translateY(0.8px) scaleY(1.12);">G</div>
<div class="t" style="left:-127px;width:400px;text-align:center;top:51.6px;height:13.2px;line-height:13.2px;font-size:6.6px;color:#333;font-weight:bold;transform:translateY(0.8px) scaleY(1.12);font-family:'Liberation Serif',serif"><i>I</i></div>
<div class="t" style="left:-115.3px;width:400px;text-align:center;top:51.800000000000004px;height:12.8px;line-height:12.8px;font-size:6.4px;color:#333;font-weight:bold;transform:translateY(0.8px) scaleY(1.12);"><u>S</u></div>
<svg class="a" style="left:91.5px;top:56.8px" width="4" height="3"><path d="M0.5 0.5 L2 2 L3.5 0.5" stroke="#444" stroke-width="0.6" fill="none"/></svg>
<div class="a" style="left:99.10000000000001px;top:53px;width:0.5999999999999943px;height:11px;background:#d0d0d0"></div>
<svg class="a" style="left:102.5px;top:54px" width="8" height="8"><rect x="0.5" y="0.5" width="7" height="7" fill="none" stroke="#bbb" stroke-width="0.6" stroke-dasharray="1 0.5"/><path d="M4 0.5 V7.5 M0.5 4 H7.5" stroke="#bbb" stroke-width="0.5"/></svg>
<svg class="a" style="left:114px;top:56.8px" width="4" height="3"><path d="M0.5 0.5 L2 2 L3.5 0.5" stroke="#444" stroke-width="0.6" fill="none"/></svg>
<div class="a" style="left:121.4px;top:53px;width:0.5999999999999943px;height:11px;background:#d0d0d0"></div>
<svg class="a" style="left:124.5px;top:53.5px" width="9" height="10"><path d="M2 5 L5 2 L8 5 L5 8 Z" fill="#fff" stroke="#666" stroke-width="0.6"/><circle cx="7.5" cy="3.2" r="1" fill="#2b79c2"/><rect x="0.5" y="8.3" width="8" height="1.5" fill="#f2e61a"/></svg>
<svg class="a" style="left:136px;top:56.8px" width="4" height="3"><path d="M0.5 0.5 L2 2 L3.5 0.5" stroke="#444" stroke-width="0.6" fill="none"/></svg>
<svg class="a" style="left:144px;top:53.5px" width="9" height="10"><path d="M1.5 7 L4.5 0.8 L7.5 7 M2.7 4.8 H6.3" stroke="#444" stroke-width="0.8" fill="none"/><rect x="0.5" y="8.2" width="8" height="1.6" fill="#e81b1b"/></svg>
<svg class="a" style="left:155px;top:56.8px" width="4" height="3"><path d="M0.5 0.5 L2 2 L3.5 0.5" stroke="#444" stroke-width="0.6" fill="none"/></svg>
<div class="t" style="left:-96.3px;width:400px;text-align:center;top:67.8px;height:10.8px;line-height:10.8px;font-size:5.4px;color:#444;font-weight:normal;transform:translateY(0.8px) scaleY(1.12);">Police</div>
<svg class="a" style="left:159.5px;top:71px" width="5" height="5"><path d="M0.5 0.5 H4.5 V4.5 H0.5 Z" fill="none" stroke="#777" stroke-width="0.5"/><path d="M1.5 1.5 L3.8 3.8 M2.5 3.8 H3.8 V2.5" fill="none" stroke="#444" stroke-width="0.6"/></svg>
<div class="a" style="left:165.1px;top:34px;width:0.6000000000000227px;height:41px;background:#d0d0d0"></div>
<div class="a" style="left:181.3px;top:37px;width:11.399999999999977px;height:11.600000000000001px;background:#c8c8c8;border:0.6px solid #b0b0b0"></div>
<div class="a" style="left:181.3px;top:52px;width:11.399999999999977px;height:12px;background:#c8c8c8;border:0.6px solid #b0b0b0"></div>
<svg class="a" style="left:171px;top:38.5px" width="8" height="8"><path d="M0.5 1.2 H7.5" stroke="#9a9a9a" stroke-width="0.9"/><path d="M0.5 2.6 H7.5" stroke="#9a9a9a" stroke-width="0.9"/><path d="M1.5 4 H6.5" stroke="#9a9a9a" stroke-width="0.9"/></svg>
<svg class="a" style="left:183px;top:38.5px" width="8" height="8"><path d="M0.5 2.6 H7.5" stroke="#9a9a9a" stroke-width="0.9"/><path d="M1.5 4 H6.5" stroke="#9a9a9a" stroke-width="0.9"/><path d="M0.5 5.4 H7.5" stroke="#9a9a9a" stroke-width="0.9"/></svg>
<svg class="a" style="left:194.7px;top:38.5px" width="8" height="8"><path d="M1.5 4 H6.5" stroke="#9a9a9a" stroke-width="0.9"/><path d="M0.5 5.4 H7.5" stroke="#9a9a9a" stroke-width="0.9"/><path d="M0.5 6.8 H7.5" stroke="#9a9a9a" stroke-width="0.9"/></svg>
<svg class="a" style="left:171px;top:54px" width="8" height="8"><path d="M0.5 1.8 H7" stroke="#9a9a9a" stroke-width="0.9"/><path d="M0.5 3.3 H5" stroke="#9a9a9a" stroke-width="0.9"/><path d="M0.5 4.8 H7" stroke="#9a9a9a" stroke-width="0.9"/></svg>
<svg class="a" style="left:183px;top:54px" width="8" height="8"><path d="M0.5 1.8 H7.5" stroke="#9a9a9a" stroke-width="0.9"/><path d="M1.5 3.3 H6.5" stroke="#9a9a9a" stroke-width="0.9"/><path d="M0.5 4.8 H7.5" stroke="#9a9a9a" stroke-width="0.9"/></svg>
<svg class="a" style="left:194.7px;top:54px" width="8" height="8"><path d="M1 1.8 H7.5" stroke="#9a9a9a" stroke-width="0.9"/><path d="M3 3.3 H7.5" stroke="#9a9a9a" stroke-width="0.9"/><path d="M1 4.8 H7.5" stroke="#9a9a9a" stroke-width="0.9"/></svg>
<svg class="a" style="left:207px;top:38.5px" width="9" height="8"><text x="0.5" y="5.5" font-size="4.2" font-family="Liberation Sans" fill="#777" transform="rotate(-30 3 4)">ab</text><path d="M2 6.5 L7.5 1.5 M5.8 1.3 L7.6 1.4 L7.5 3.2" stroke="#777" stroke-width="0.6" fill="none"/></svg>
<svg class="a" style="left:216.4px;top:41.0px" width="4" height="3"><path d="M0.5 0.5 L2 2 L3.5 0.5" stroke="#444" stroke-width="0.6" fill="none"/></svg>
<svg class="a" style="left:207px;top:54.5px" width="8" height="8"><rect x="0.5" y="0.3" width="7" height="7.2" fill="#d6d6d6"/><rect x="3.2" y="1.2" width="3.6" height="5.4" fill="#fff"/><circle cx="2.3" cy="3.9" r="1" fill="#2b79c2"/><path d="M1.3 3.9 H4" stroke="#2b79c2" stroke-width="0.6"/></svg>
<svg class="a" style="left:219px;top:54.5px" width="8" height="8"><rect x="0.5" y="0.3" width="7" height="7.2" fill="#d6d6d6"/><rect x="1.2" y="1.2" width="3.6" height="5.4" fill="#fff"/><circle cx="5.3" cy="3.9" r="1" fill="#2b79c2"/><path d="M3 3.9 H6" stroke="#2b79c2" stroke-width="0.6"/></svg>
<div class="a" style="left:230.29999999999998px;top:37px;width:0.6000000000000227px;height:28px;background:#d0d0d0"></div>
<svg class="a" style="left:234.5px;top:38px" width="9" height="9"><text x="2.2" y="3.6" font-size="4" font-family="Liberation Sans" fill="#666">ab</text><text x="0.3" y="7.8" font-size="4" font-family="Liberation Sans" fill="#666">c</text><path d="M3.5 5.8 H6.5 A1.1 1.1 0 0 0 6.5 3.8 M3.5 5.8 L4.5 5 M3.5 5.8 L4.5 6.6" stroke="#2b79c2" stroke-width="0.6" fill="none"/></svg>
<div class="a" style="left:232.6px;top:52px;width:22.900000000000006px;height:12px;background:#c8c8c8;border:0.6px solid #b0b0b0"></div>
<svg class="a" style="left:234.5px;top:54px" width="9" height="8"><rect x="0.5" y="0.5" width="8" height="7" fill="#fff" stroke="#999" stroke-width="0.4" stroke-dasharray="0.8 0.5"/><path d="M1.2 4 H3.6 M7.8 4 H5.4" stroke="#2b79c2" stroke-width="0.7"/><path d="M2.8 3 L3.7 4 L2.8 5 M6.2 3 L5.3 4 L6.2 5" stroke="#2b79c2" stroke-width="0.5" fill="none"/></svg>
<svg class="a" style="left:247.5px;top:56.8px" width="4" height="3"><path d="M0.5 0.5 L2 2 L3.5 0.5" stroke="#444" stroke-width="0.6" fill="none"/></svg>
<div class="t" style="left:8px;width:400px;text-align:center;top:67.8px;height:10.8px;line-height:10.8px;font-size:5.4px;color:#444;font-weight:normal;transform:translateY(0.8px) scaleY(1.12);">Alignement</div>
<svg class="a" style="left:253px;top:71px" width="5" height="5"><path d="M0.5 0.5 H4.5 V4.5 H0.5 Z" fill="none" stroke="#777" stroke-width="0.5"/><path d="M1.5 1.5 L3.8 3.8 M2.5 3.8 H3.8 V2.5" fill="none" stroke="#444" stroke-width="0.6"/></svg>
<div class="a" style="left:259.2px;top:34px;width:0.6000000000000227px;height:41px;background:#d0d0d0"></div>
<div class="a" style="left:263.2px;top:37.1px;width:69.19999999999999px;height:11.5px;background:#fff;border:0.6px solid #c6c6c6"></div>
<div class="t" style="left:265px;top:36.8px;height:12.0px;line-height:12.0px;font-size:6.0px;color:#333;font-weight:normal;transform:translateY(0.8px) scaleY(1.12);">Standard</div>
<svg class="a" style="left:327px;top:41.5px" width="4" height="3"><polygon points="0.3,0.5 3.7,0.5 2,2.5" fill="#444"/></svg>
<svg class="a" style="left:264.5px;top:54px" width="9" height="9"><rect x="0.5" y="0.5" width="7" height="4.5" fill="#2b79c2"/><rect x="2" y="1.5" width="4" height="2.5" fill="#fff"/><circle cx="6" cy="6.5" r="2" fill="#e8c07a"/></svg>
<svg class="a" style="left:276px;top:56.8px" width="4" height="3"><path d="M0.5 0.5 L2 2 L3.5 0.5" stroke="#444" stroke-width="0.6" fill="none"/></svg>
<div class="t" style="left:88.19999999999999px;width:400px;text-align:center;top:50.800000000000004px;height:15.6px;line-height:15.6px;font-size:7.8px;color:#707070;font-weight:normal;transform:translateY(0.8px) scaleY(1.12);">%</div>
<div class="t" style="left:100px;width:400px;text-align:center;top:54.2px;height:8.8px;line-height:8.8px;font-size:4.4px;color:#707070;font-weight:normal;transform:translateY(0.8px) scaleY(1.12);">000</div>
<div class="a" style="left:307.3px;top:53px;width:0.6000000000000227px;height:11px;background:#d0d0d0"></div>
<svg class="a" style="left:311.5px;top:54px" width="9" height="9"><path d="M0.5 2 H4 M1.8 0.8 L0.5 2 L1.8 3.2" stroke="#2b79c2" stroke-width="0.8" fill="none"/><rect x="5" y="0.5" width="0.9" height="3.3" fill="#888"/><rect x="6.8" y="0.5" width="1.6" height="3.3" fill="none" stroke="#888" stroke-width="0.5"/><rect x="2.2" y="5" width="0.9" height="3.3" fill="#888"/><rect x="4" y="5" width="1.6" height="3.3" fill="none" stroke="#888" stroke-width="0.5"/><rect x="6.4" y="5" width="1.6" height="3.3" fill="none" stroke="#888" stroke-width="0.5"/></svg>
<svg class="a" style="left:322.5px;top:54px" width="9" height="9"><rect x="3.5" y="0.5" width="0.9" height="3.3" fill="#888"/><rect x="5.2" y="0.5" width="1.6" height="3.3" fill="none" stroke="#888" stroke-width="0.5"/><rect x="7" y="0.5" width="1.6" height="3.3" fill="none" stroke="#888" stroke-width="0.5"/><path d="M0.5 6.5 H4 M1.8 5.3 L0.5 6.5 L1.8 7.7" stroke="#2b79c2" stroke-width="0.8" fill="none"/><rect x="5.5" y="5" width="0.9" height="3.3" fill="#888"/><rect x="7.2" y="5" width="1.6" height="3.3" fill="none" stroke="#888" stroke-width="0.5"/></svg>
<div class="t" style="left:93.39999999999998px;width:400px;text-align:center;top:67.8px;height:10.8px;line-height:10.8px;font-size:5.4px;color:#444;font-weight:normal;transform:translateY(0.8px) scaleY(1.12);">Nombre</div>
<svg class="a" style="left:330.5px;top:71px" width="5" height="5"><path d="M0.5 0.5 H4.5 V4.5 H0.5 Z" fill="none" stroke="#777" stroke-width="0.5"/><path d="M1.5 1.5 L3.8 3.8 M2.5 3.8 H3.8 V2.5" fill="none" stroke="#444" stroke-width="0.6"/></svg>
<div class="a" style="left:336.0px;top:34px;width:0.6000000000000227px;height:41px;background:#d0d0d0"></div>
<svg class="a" style="left:356px;top:37px" width="15" height="14"><rect x="0.5" y="0.5" width="10" height="10" fill="#fff" stroke="#999" stroke-width="0.5"/><path d="M0.5 3.5 H10.5 M0.5 6.5 H10.5 M4 0.5 V10.5" stroke="#999" stroke-width="0.5"/><rect x="4" y="0.6" width="2.5" height="2.8" fill="#e84c3d"/><rect x="4" y="3.6" width="4.5" height="2.8" fill="#2b79c2"/><rect x="4" y="6.6" width="2" height="2.8" fill="#e86c2d"/><rect x="8" y="7.5" width="6.5" height="6" fill="#fff" stroke="#666" stroke-width="0.5"/><path d="M10 12 L12.5 9" stroke="#666" stroke-width="0.5"/></svg>
<div class="t" style="left:163px;width:400px;text-align:center;top:49.74px;height:11.52px;line-height:11.52px;font-size:5.76px;color:#333;font-weight:normal;transform:translateY(0.8px) scaleY(1.12);">Mise en forme</div>
<div class="t" style="left:162.7px;width:400px;text-align:center;top:57.84px;height:11.52px;line-height:11.52px;font-size:5.76px;color:#333;font-weight:normal;transform:translateY(0.8px) scaleY(1.12);">conditionnelle <span style="font-size:4px">˅</span></div>
<svg class="a" style="left:404px;top:37px" width="15" height="14"><rect x="0.5" y="0.5" width="11" height="10" fill="#dce8f5" stroke="#999" stroke-width="0.5"/><path d="M0.5 3.5 H11.5 M0.5 6.5 H11.5 M4 0.5 V10.5 M8 0.5 V10.5" stroke="#999" stroke-width="0.5"/><path d="M7 13 L14 6" stroke="#555" stroke-width="1.2"/><path d="M6 13.5 L9 10.5" stroke="#2b79c2" stroke-width="1.8"/></svg>
<div class="t" style="left:210.8px;width:400px;text-align:center;top:49.74px;height:11.52px;line-height:11.52px;font-size:5.76px;color:#333;font-weight:normal;transform:translateY(0.8px) scaleY(1.12);">Mettre sous forme</div>
<div class="t" style="left:210.5px;width:400px;text-align:center;top:57.84px;height:11.52px;line-height:11.52px;font-size:5.76px;color:#333;font-weight:normal;transform:translateY(0.8px) scaleY(1.12);">de tableau <span style="font-size:4px">˅</span></div>
<svg class="a" style="left:441.8px;top:37px" width="15" height="14"><rect x="0.5" y="0.5" width="11" height="10" fill="#fff" stroke="#999" stroke-width="0.5"/><rect x="2.5" y="2.5" width="7" height="6" fill="#c8daf0"/><path d="M7 13 L14 6" stroke="#555" stroke-width="1.2"/><path d="M6 13.5 L9 10.5" stroke="#2b79c2" stroke-width="1.8"/></svg>
<div class="t" style="left:249.8px;width:400px;text-align:center;top:49.74px;height:11.52px;line-height:11.52px;font-size:5.76px;color:#333;font-weight:normal;transform:translateY(0.8px) scaleY(1.12);">Styles de</div>
<div class="t" style="left:249.5px;width:400px;text-align:center;top:57.84px;height:11.52px;line-height:11.52px;font-size:5.76px;color:#333;font-weight:normal;transform:translateY(0.8px) scaleY(1.12);">cellules <span style="font-size:4px">˅</span></div>
<div class="t" style="left:201.3px;width:400px;text-align:center;top:67.8px;height:10.8px;line-height:10.8px;font-size:5.4px;color:#444;font-weight:normal;transform:translateY(0.8px) scaleY(1.12);">Styles</div>
<div class="a" style="left:467.0px;top:34px;width:0.6000000000000227px;height:41px;background:#d0d0d0"></div>
<svg class="a" style="left:473px;top:35.5px" width="8" height="7"><rect x="0.5" y="0.5" width="7" height="6" fill="#fff" stroke="#888" stroke-width="0.5"/><path d="M0.5 3.5 H7.5 M3.5 0.5 V6.5" stroke="#888" stroke-width="0.5"/><path d="M1 3.5 H5" stroke="#2b79c2" stroke-width="0.8"/></svg>
<div class="t" style="left:482.5px;top:33.04px;height:11.52px;line-height:11.52px;font-size:5.76px;color:#333;font-weight:normal;transform:translateY(0.8px) scaleY(1.12);">Insérer</div>
<svg class="a" style="left:507.4px;top:37.3px" width="4" height="3"><path d="M0.5 0.5 L2 2 L3.5 0.5" stroke="#444" stroke-width="0.6" fill="none"/></svg>
<svg class="a" style="left:473px;top:47px" width="8" height="7"><rect x="0.5" y="0.5" width="7" height="6" fill="#fff" stroke="#888" stroke-width="0.5"/><path d="M0.5 3.5 H7.5 M3.5 0.5 V6.5" stroke="#888" stroke-width="0.5"/><path d="M4 1.5 L7.5 5.5 M7.5 1.5 L4 5.5" stroke="#e84c3d" stroke-width="0.8"/></svg>
<div class="t" style="left:482.5px;top:44.54px;height:11.52px;line-height:11.52px;font-size:5.76px;color:#333;font-weight:normal;transform:translateY(0.8px) scaleY(1.12);">Supprimer</div>
<svg class="a" style="left:517.3px;top:48.8px" width="4" height="3"><path d="M0.5 0.5 L2 2 L3.5 0.5" stroke="#444" stroke-width="0.6" fill="none"/></svg>
<svg class="a" style="left:473px;top:58.5px" width="8" height="7"><rect x="0.5" y="0.5" width="7" height="6" fill="#fff" stroke="#888" stroke-width="0.5"/><rect x="2.5" y="2.2" width="3" height="2.6" fill="#2b79c2"/></svg>
<div class="t" style="left:482.5px;top:56.14px;height:11.52px;line-height:11.52px;font-size:5.76px;color:#333;font-weight:normal;transform:translateY(0.8px) scaleY(1.12);">Format</div>
<svg class="a" style="left:502px;top:60.4px" width="4" height="3"><path d="M0.5 0.5 L2 2 L3.5 0.5" stroke="#444" stroke-width="0.6" fill="none"/></svg>
<div class="t" style="left:297.8px;width:400px;text-align:center;top:67.8px;height:10.8px;line-height:10.8px;font-size:5.4px;color:#444;font-weight:normal;transform:translateY(0.8px) scaleY(1.12);">Cellules</div>
<div class="a" style="left:529.3000000000001px;top:34px;width:0.599999999999909px;height:41px;background:#d0d0d0"></div>
<div class="t" style="left:338.79999999999995px;width:400px;text-align:center;top:31.199999999999996px;height:15.2px;line-height:15.2px;font-size:7.6px;color:#333;font-weight:normal;transform:translateY(0.8px) scaleY(1.12);">Σ</div>
<svg class="a" style="left:548.2px;top:37.3px" width="4" height="3"><path d="M0.5 0.5 L2 2 L3.5 0.5" stroke="#444" stroke-width="0.6" fill="none"/></svg>
<svg class="a" style="left:535px;top:46.5px" width="8" height="8"><rect x="0.5" y="0.5" width="7" height="7" fill="#fff" stroke="#777" stroke-width="0.6"/><path d="M4 2 V5.5" stroke="#2b79c2" stroke-width="0.8"/><polygon points="2.5,4.5 5.5,4.5 4,6.5" fill="#2b79c2"/></svg>
<svg class="a" style="left:544.7px;top:48.8px" width="4" height="3"><path d="M0.5 0.5 L2 2 L3.5 0.5" stroke="#444" stroke-width="0.6" fill="none"/></svg>
<svg class="a" style="left:535px;top:59px" width="8" height="6"><path d="M1.5 5 L6.5 1" stroke="#e87a8a" stroke-width="2.4"/></svg>
<svg class="a" style="left:544.7px;top:60.5px" width="4" height="3"><path d="M0.5 0.5 L2 2 L3.5 0.5" stroke="#444" stroke-width="0.6" fill="none"/></svg>
<svg class="a" style="left:560.4px;top:36.4px" width="15" height="13"><text x="0.5" y="6" font-size="6" font-weight="bold" font-family="Liberation Sans" fill="#2b79c2">A</text><text x="0.8" y="12.5" font-size="6" font-weight="bold" font-family="Liberation Sans" fill="#8e5bbf">Z</text><polygon points="7,3.5 14.5,3.5 11.7,7 11.7,10.5 9.8,9.5 9.8,7" fill="#666"/></svg>
<div class="t" style="left:367.70000000000005px;width:400px;text-align:center;top:49.74px;height:11.52px;line-height:11.52px;font-size:5.76px;color:#333;font-weight:normal;transform:translateY(0.8px) scaleY(1.12);">Trier et</div>
<div class="t" style="left:367.70000000000005px;width:400px;text-align:center;top:57.84px;height:11.52px;line-height:11.52px;font-size:5.76px;color:#333;font-weight:normal;transform:translateY(0.8px) scaleY(1.12);">filtrer <span style="font-size:4px">˅</span></div>
<svg class="a" style="left:591.8px;top:36px" width="14" height="13"><circle cx="8.5" cy="5" r="4" fill="none" stroke="#2b79c2" stroke-width="1.1"/><path d="M5.6 8 L1.5 12" stroke="#2b79c2" stroke-width="1.8"/></svg>
<div class="t" style="left:398.79999999999995px;width:400px;text-align:center;top:49.74px;height:11.52px;line-height:11.52px;font-size:5.76px;color:#333;font-weight:normal;transform:translateY(0.8px) scaleY(1.12);">Rechercher et</div>
<div class="t" style="left:398.5px;width:400px;text-align:center;top:57.84px;height:11.52px;line-height:11.52px;font-size:5.76px;color:#333;font-weight:normal;transform:translateY(0.8px) scaleY(1.12);">sélectionner <span style="font-size:4px">˅</span></div>
<div class="t" style="left:375px;width:400px;text-align:center;top:67.8px;height:10.8px;line-height:10.8px;font-size:5.4px;color:#444;font-weight:normal;transform:translateY(0.8px) scaleY(1.12);">Édition</div>
<div class="a" style="left:621.9000000000001px;top:34px;width:0.599999999999909px;height:41px;background:#d0d0d0"></div>
<svg class="a" style="left:642.5px;top:39px" width="6" height="6"><circle cx="2.7" cy="2.8" r="2.3" fill="#f7931e"/></svg>
<div class="t" style="left:445.4px;width:400px;text-align:center;top:49.84px;height:11.52px;line-height:11.52px;font-size:5.76px;color:#333;font-weight:normal;transform:translateY(0.8px) scaleY(1.12);">Compléments</div>
<div class="t" style="left:444.6px;width:400px;text-align:center;top:68.0px;height:10.8px;line-height:10.8px;font-size:5.4px;color:#444;font-weight:normal;transform:translateY(0.8px) scaleY(1.12);">Compléments</div>
<div class="a" style="left:668.6px;top:34px;width:0.599999999999909px;height:41px;background:#d0d0d0"></div>
<svg class="a" style="left:750px;top:71.5px" width="6" height="4"><path d="M0.8 3.2 L3 1 L5.2 3.2" stroke="#444" stroke-width="0.7" fill="none"/></svg>
</body></html>
